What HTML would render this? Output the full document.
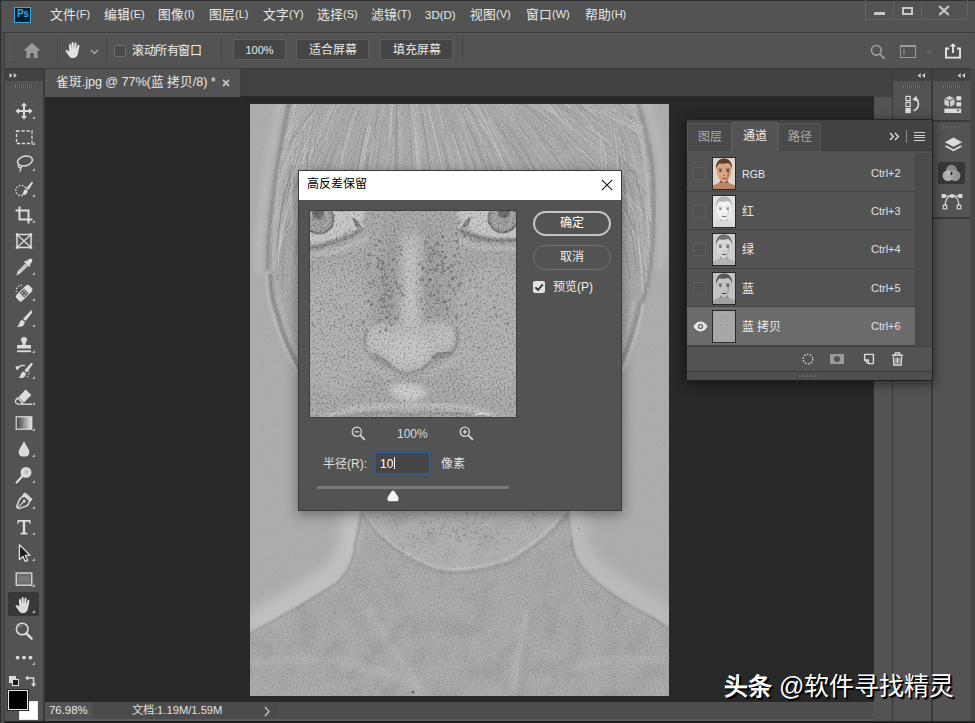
<!DOCTYPE html>
<html lang="zh-CN">
<head>
<meta charset="utf-8">
<title>Photoshop</title>
<style>
html,body{margin:0;padding:0}
body{width:975px;height:723px;overflow:hidden;background:#535353;font-family:"Liberation Sans",sans-serif;font-size:12px;color:#e4e4e4;position:relative;line-height:1}
div,span,svg{position:absolute;box-sizing:border-box}
span{white-space:nowrap}
.menu i{font-style:normal;font-size:11px;position:relative;top:-1px}
.menu span{top:9px;font-size:12px;color:#e8e8e8;letter-spacing:0}
.obtn{top:39px;height:21px;background:#454545;border:1px solid #5f5f5f;border-radius:2px;text-align:center;line-height:20px;color:#eaeaea;font-size:12px}
.vsep{width:1px;background:#474747;top:38px;height:24px}
.row{left:688px;width:227px;height:38px;background:#535353;border-bottom:1px solid #434343}
.row .nm{left:55px;top:14px;font-size:12px;color:#ececec}
.row .sc{left:184px;top:14px;font-size:11px;color:#e0e0e0}
.row .eyebox{left:6px;top:13px;width:13px;height:13px;border:1px solid #5d5d5d;background:#515151}
.row .th{left:25px;top:3px;width:24px;height:33px;border:1px solid #2a2a2a;overflow:hidden}
.ptab{top:123px;height:28px;font-size:12px;text-align:center;line-height:27px;color:#a9a9a9;background:#4a4a4a;border:1px solid #565656;border-bottom:none}
.tool{left:10px;width:28px;height:24px}
.tri{width:0;height:0;border-left:3px solid transparent;border-bottom:3px solid #b8b8b8;left:33px}
</style>
</head>
<body>
<!-- ===== window chrome ===== -->
<div id="menubar" class="menu" style="left:0;top:0;width:975px;height:33px;background:#535353;border-top:1px solid #303030;border-bottom:1px solid #3b3b3b">
<div style="left:14px;top:6px;width:17px;height:16px;background:#0a1e2c;border:1px solid #31a8e0"></div>
<span style="left:17px;top:8px;font-size:10px;font-weight:bold;color:#31a8e0;letter-spacing:-0.5px">Ps</span>
<span style="left:50px;font-size:12.8px;top:8px">文件<i>(F)</i></span>
<span style="left:104px;font-size:12.8px;top:8px">编辑<i>(E)</i></span>
<span style="left:158px;font-size:12.8px;top:8px">图像<i>(I)</i></span>
<span style="left:209px;font-size:12.8px;top:8px">图层<i>(L)</i></span>
<span style="left:263px;font-size:12.8px;top:8px">文字<i>(Y)</i></span>
<span style="left:317px;font-size:12.8px;top:8px">选择<i>(S)</i></span>
<span style="left:371px;font-size:12.8px;top:8px">滤镜<i>(T)</i></span>
<span style="left:425px;font-size:11.5px;top:9px">3D(D)</span>
<span style="left:470px;font-size:12.8px;top:8px">视图<i>(V)</i></span>
<span style="left:526px;font-size:12.8px;top:8px">窗口<i>(W)</i></span>
<span style="left:585px;font-size:12.8px;top:8px">帮助<i>(H)</i></span>
<!-- window controls -->
<div style="left:865px;top:-1px;width:103px;height:20px;border:1px solid #616161;border-top:none"></div>
<div style="left:893px;top:0;width:1px;height:18px;background:#616161"></div>
<div style="left:921px;top:0;width:1px;height:18px;background:#616161"></div>
<div style="left:874px;top:11px;width:11px;height:3px;background:#c8c8c8"></div>
<div style="left:902px;top:6px;width:11px;height:8px;border:2px solid #c8c8c8"></div>
<svg style="left:938px;top:4px" width="12" height="11" viewBox="0 0 12 11"><path d="M1.2 1 L10.8 10 M10.8 1 L1.2 10" stroke="#c8c8c8" stroke-width="2.2" fill="none"/></svg>
</div>
<div id="optbar" style="left:4px;top:33px;width:966px;height:36px;background:#535353;border-top:1px solid #5b5b5b;border-bottom:1px solid #3a3a3a"></div>
<!-- options bar content (page coords) -->
<div style="left:8px;top:40px;width:5px;height:21px;background:repeating-linear-gradient(to bottom,#5c5c5c 0,#5c5c5c 1px,#4c4c4c 1px,#4c4c4c 2px)"></div>
<svg style="left:23px;top:42px" width="18" height="17" viewBox="0 0 18 17"><path d="M9 1 L17.5 8.6 L14.6 8.6 L14.6 16 L10.8 16 L10.8 11 L7.2 11 L7.2 16 L3.4 16 L3.4 8.6 L0.5 8.6 Z" fill="#9b9b9b"/></svg>
<div class="vsep" style="left:57px"></div>
<svg id="handopt" style="left:64px;top:40px" width="20" height="20" viewBox="0 0 20 20"><path d="M5.2 11.5 L4.9 5.2 Q5 4 5.9 4 Q6.8 4 6.9 5.1 L7.3 9.3 L7.5 3.2 Q7.6 2 8.6 2 Q9.6 2 9.7 3.2 L9.9 9 L10.6 3.4 Q10.8 2.3 11.7 2.4 Q12.7 2.5 12.6 3.7 L12.3 9.4 L13.5 5.6 Q13.9 4.6 14.7 4.8 Q15.6 5.1 15.4 6.2 L14.3 12 Q13.9 15 12.6 16.6 Q11.2 18.3 8.9 18.3 Q6.6 18.3 5.1 16.3 L1.8 11.6 Q1.3 10.7 2.1 10.2 Q2.9 9.7 3.7 10.4 Z" fill="#e2e2e2"/></svg>
<svg style="left:90px;top:49px" width="9" height="6" viewBox="0 0 9 6"><path d="M1 1 L4.5 4.5 L8 1" stroke="#a8a8a8" stroke-width="1.4" fill="none"/></svg>
<div class="vsep" style="left:106px"></div>
<div style="left:114px;top:45px;width:12px;height:12px;border:1px solid #6f6f6f;border-radius:2px;background:#4a4a4a"></div>
<span style="left:132px;top:45px;font-size:12px;color:#ededed;letter-spacing:-0.4px">滚动所有窗口</span>
<div class="vsep" style="left:221px"></div>
<div class="obtn" style="left:233px;width:53px;font-size:11px">100%</div>
<div class="obtn" style="left:296px;width:73px">适合屏幕</div>
<div class="obtn" style="left:380px;width:73px">填充屏幕</div>
<div class="vsep" style="left:457px;background:#4b4b4b"></div>
<div class="vsep" style="left:462px"></div>
<!-- right side icons of options bar -->
<svg style="left:870px;top:44px" width="16" height="16" viewBox="0 0 16 16"><circle cx="6.3" cy="6.3" r="4.8" stroke="#a0a0a0" stroke-width="1.6" fill="none"/><path d="M9.8 9.8 L14.6 14.6" stroke="#a0a0a0" stroke-width="1.8"/></svg>
<div style="left:900px;top:45px;width:16px;height:13px;border:1px solid #9a9a9a;border-top:2px solid #9a9a9a"></div>
<div style="left:903px;top:49px;width:2px;height:6px;background:repeating-linear-gradient(to bottom,#9a9a9a 0,#9a9a9a 1px,transparent 1px,transparent 2px)"></div>
<svg style="left:926px;top:50px" width="7" height="5" viewBox="0 0 7 5"><path d="M1 1 L3.5 3.5 L6 1" stroke="#6a6a6a" stroke-width="1.2" fill="none"/></svg>
<svg style="left:944px;top:42px" width="18" height="17" viewBox="0 0 18 17"><path d="M5 6.5 L2 6.5 L2 15.6 L16 15.6 L16 6.5 L13 6.5" stroke="#e6e6e6" stroke-width="1.9" fill="none"/><path d="M9 11 L9 2.5" stroke="#e6e6e6" stroke-width="1.9"/><path d="M5.6 4.6 L9 1.2 L12.4 4.6 Z" fill="#e6e6e6"/></svg>
<div id="tabrow" style="left:45px;top:69px;width:829px;height:28px;background:#424242;border-bottom:1px solid #2c2c2c">
<div style="left:0;top:0;width:196px;height:28px;background:#535353;border-right:1px solid #3e3e3e"></div>
<span style="left:11px;top:7px;font-size:12.7px;color:#e6e6e6;letter-spacing:-0.1px">雀斑.jpg @ 77%(蓝 拷贝/8) *</span>
<svg style="left:177px;top:10px" width="8" height="8" viewBox="0 0 8 8"><path d="M1 1 L7 7 M7 1 L1 7" stroke="#bdbdbd" stroke-width="1.8" fill="none"/></svg>
</div>
<div id="canvas" style="left:45px;top:97px;width:829px;height:606px;background:#282828"></div>
<!--DOC-->
<svg id="docimg" style="left:250px;top:104px" width="419" height="592" viewBox="0 0 419 592">
<defs><filter id="gr" x="0" y="0" width="100%" height="100%"><feTurbulence type="fractalNoise" baseFrequency="0.75" numOctaves="2" seed="5"/><feColorMatrix type="matrix" values="2.4 0 0 0 -0.7  2.4 0 0 0 -0.7  2.4 0 0 0 -0.7  0 0 0 0 1"/></filter><filter id="mot" x="0" y="0" width="100%" height="100%"><feTurbulence type="fractalNoise" baseFrequency="0.045" numOctaves="3" seed="4"/><feColorMatrix type="matrix" values="2.2 0 0 0 -0.6  2.2 0 0 0 -0.6  2.2 0 0 0 -0.6  0 0 0 0 1"/></filter><filter id="hairn" x="0" y="0" width="100%" height="100%"><feTurbulence type="fractalNoise" baseFrequency="0.012 0.22" numOctaves="3" seed="11"/><feColorMatrix type="matrix" values="3 0 0 0 -1  3 0 0 0 -1  3 0 0 0 -1  0 0 0 0 1"/></filter><filter id="bl05" x="0" y="0" width="100%" height="100%"><feGaussianBlur stdDeviation="0.45"/></filter><filter id="bl1"><feGaussianBlur stdDeviation="1"/></filter><filter id="bl3"><feGaussianBlur stdDeviation="3"/></filter><filter id="bl6"><feGaussianBlur stdDeviation="6"/></filter><clipPath id="hairclip"><path d="M38 -5 Q26 50 20 99 Q15 140 16 165 Q17 188 20 200 L44 172 Q54 140 74 122 Q120 86 215 90 Q300 86 346 122 Q366 140 376 172 L396 192 Q402 175 403 160 Q408 110 404 60 Q398 20 388 -5 Z"/></clipPath><clipPath id="docclip"><rect width="419" height="592"/></clipPath></defs>
<g clip-path="url(#docclip)">
<rect width="419" height="592" fill="#acacac"/>
<path d="M38 -5 Q26 50 20 99 Q15 140 16 165 Q18 200 24 211 Q30 240 48 269 Q70 340 100 392 Q140 448 215 466 Q300 440 340 392 Q364 330 372 270 Q386 240 394 199 Q402 175 403 160 Q408 110 404 60 Q398 20 388 -5 Z" fill="#a8a8a8" filter="url(#bl1)"/>
<path d="M31 -5 Q19 50 13 99 Q8 140 9 170 M395 -5 Q405 20 411 60 Q415 110 410 165" fill="none" stroke="#bcbcbc" stroke-width="6" filter="url(#bl3)"/>
<path d="M52 180 Q70 100 210 90 Q350 100 368 180 Q380 262 340 392 Q300 440 215 466 Q140 448 100 392 Q40 262 52 180 Z" fill="#a9a9a9" filter="url(#bl6)"/>
<g clip-path="url(#hairclip)" fill="none" opacity=".75" filter="url(#bl05)"><path d="M211.3 4.5 Q232.7 38.2 250.3 82.6" stroke="#bcbcbc" stroke-width="0.5"/><path d="M188.7 -8.3 Q203.1 22.6 215 62.5" stroke="#929292" stroke-width="0.8"/><path d="M257.7 -27.7 Q291.5 -14.7 312.4 18.4" stroke="#c0c0c0" stroke-width="0.6"/><path d="M64.1 70.6 Q56.9 87.7 52.4 110.6" stroke="#c8c8c8" stroke-width="0.6"/><path d="M451.3 36.4 Q480.4 46.2 506.4 68.7" stroke="#c0c0c0" stroke-width="1"/><path d="M303.5 101.2 Q316.4 120.6 324.6 147.7" stroke="#d0d0d0" stroke-width="0.6"/><path d="M230.8 65.4 Q237.9 82.5 243.7 105.3" stroke="#c4c4c4" stroke-width="0.8"/><path d="M53 45.1 Q38 68.7 28.6 101.1" stroke="#d6d6d6" stroke-width="0.7"/><path d="M306.8 97 Q332 131 351.1 177" stroke="#828282" stroke-width="0.7"/><path d="M127.8 110.6 Q124.4 151 121.9 201" stroke="#c0c0c0" stroke-width="0.5"/><path d="M145.6 5.5 Q144.5 33 144 67.5" stroke="#929292" stroke-width="0.5"/><path d="M42.1 -33.4 Q1.6 -21.4 -24.8 15.1" stroke="#868686" stroke-width="0.7"/><path d="M23.4 68.4 Q1.4 99.2 -13.5 141.4" stroke="#c0c0c0" stroke-width="0.7"/><path d="M168.9 79.7 Q170.4 97.6 171.2 120.9" stroke="#d0d0d0" stroke-width="1"/><path d="M-151.5 17 Q-181.3 24.4 -206.3 47.5" stroke="#d0d0d0" stroke-width="0.7"/><path d="M356.8 -5.1 Q381.4 2.1 403.9 20.3" stroke="#c8c8c8" stroke-width="0.6"/><path d="M65.2 -4.4 Q45.9 14.2 32 42.3" stroke="#d6d6d6" stroke-width="0.5"/><path d="M306.8 22.3 Q330.7 38.7 350.7 65.2" stroke="#929292" stroke-width="1"/><path d="M264.9 39.9 Q284 63.4 293.9 97.5" stroke="#c4c4c4" stroke-width="0.6"/><path d="M270.5 -19.8 Q313 -2.6 351.9 30" stroke="#828282" stroke-width="0.6"/><path d="M206.6 -19.7 Q228.6 4.7 244.3 39.7" stroke="#828282" stroke-width="0.7"/><path d="M-109.5 21.7 Q-147.8 34.1 -175.4 67.7" stroke="#d0d0d0" stroke-width="0.5"/><path d="M188 111.8 Q195 159.3 199 218.3" stroke="#bcbcbc" stroke-width="0.8"/><path d="M203.9 42.5 Q214.7 73.5 222 113.1" stroke="#c4c4c4" stroke-width="0.5"/><path d="M-52.5 -8.8 Q-74.8 -2.4 -91.5 17.6" stroke="#c0c0c0" stroke-width="0.5"/><path d="M107.6 63.3 Q96.8 110.3 90.4 169" stroke="#c0c0c0" stroke-width="0.6"/><path d="M109.6 5.5 Q100.7 28.9 94.4 59.3" stroke="#868686" stroke-width="0.8"/><path d="M421 63.6 Q473.6 90 512.2 140.8" stroke="#d6d6d6" stroke-width="0.7"/><path d="M258.3 -24.3 Q288.3 -11.4 313 15.2" stroke="#cecece" stroke-width="1"/><path d="M480.9 34.1 Q520.6 44.6 556.6 72" stroke="#bcbcbc" stroke-width="0.5"/><path d="M39.1 19.7 Q9.3 48.8 -15.5 90.1" stroke="#8c8c8c" stroke-width="1"/><path d="M198.6 8.1 Q217 47.4 228.7 98.2" stroke="#bcbcbc" stroke-width="0.7"/><path d="M57.6 75 Q38.5 114.6 28.1 166.4" stroke="#c4c4c4" stroke-width="0.6"/><path d="M-69.5 67.6 Q-90.9 83.6 -105.6 110.4" stroke="#868686" stroke-width="0.5"/><path d="M-142.7 16.1 Q-180.4 25.1 -214.3 51.1" stroke="#828282" stroke-width="0.7"/><path d="M198.7 122.3 Q207.4 170.9 211.5 231.4" stroke="#868686" stroke-width="0.5"/><path d="M255.4 7.7 Q273.8 24.6 288.5 50.1" stroke="#828282" stroke-width="1"/><path d="M-25.4 30.5 Q-62.7 54 -84.5 97.1" stroke="#c0c0c0" stroke-width="0.5"/><path d="M-118.7 45.4 Q-164.4 64.6 -198.5 106" stroke="#cecece" stroke-width="0.8"/><path d="M22 20.5 Q-15.5 51.4 -34.2 101.8" stroke="#929292" stroke-width="0.8"/><path d="M240.9 125.7 Q254.1 164.6 264.2 213.8" stroke="#cecece" stroke-width="0.5"/><path d="M419.6 79.2 Q462.9 105.1 499.3 147.9" stroke="#828282" stroke-width="0.8"/><path d="M73 34.9 Q55.6 66.3 41.7 107.4" stroke="#c8c8c8" stroke-width="0.5"/><path d="M125.5 119.4 Q122.8 149.8 121.5 188.1" stroke="#c4c4c4" stroke-width="0.5"/><path d="M256.4 20 Q274.4 39.2 285.8 67.9" stroke="#8c8c8c" stroke-width="1"/><path d="M177.9 2.7 Q190.5 48.2 199.4 105" stroke="#d6d6d6" stroke-width="1"/><path d="M-23.3 40.2 Q-64.4 69.4 -86.6 119.9" stroke="#cecece" stroke-width="1"/><path d="M334.8 32.6 Q380.5 59.8 407.7 110.5" stroke="#828282" stroke-width="0.5"/><path d="M59.5 -2.3 Q42.9 13.4 32.4 38.1" stroke="#c0c0c0" stroke-width="1"/><path d="M403.6 26.1 Q442 39.8 471.2 73.1" stroke="#c0c0c0" stroke-width="1"/><path d="M284 -20.4 Q302.7 -12.9 319.6 3.1" stroke="#d6d6d6" stroke-width="1"/><path d="M465.3 31.6 Q485.4 38.1 502.3 55.3" stroke="#bcbcbc" stroke-width="1"/><path d="M140.9 82.5 Q139.6 113.6 138.8 152.6" stroke="#d6d6d6" stroke-width="1"/><path d="M-108.6 26.5 Q-161.2 44.1 -191.4 93.7" stroke="#8c8c8c" stroke-width="1"/><path d="M21.6 -10.7 Q-11.4 5.2 -36.5 37" stroke="#929292" stroke-width="0.8"/><path d="M279.6 80.7 Q297.3 107.6 310.9 143.7" stroke="#8c8c8c" stroke-width="0.5"/><path d="M32 -16.5 Q-11.6 3.4 -40.7 46" stroke="#cecece" stroke-width="0.7"/><path d="M-150.5 74.7 Q-174.5 87.4 -187.4 114.7" stroke="#929292" stroke-width="0.8"/><path d="M363.7 54 Q385.9 69.1 399.7 96.2" stroke="#bcbcbc" stroke-width="0.8"/><path d="M211.3 11.7 Q224.9 36 232.6 68.9" stroke="#c8c8c8" stroke-width="0.7"/><path d="M119.3 48.4 Q116.6 64.8 114.6 86.2" stroke="#828282" stroke-width="0.7"/><path d="M146.3 -9.2 Q144.3 39.8 143.2 100.2" stroke="#c0c0c0" stroke-width="0.5"/><path d="M211.6 -14.5 Q242.7 19.7 266.1 67.7" stroke="#cecece" stroke-width="0.8"/><path d="M-70.8 51.9 Q-119.2 80.4 -155.2 130.3" stroke="#bcbcbc" stroke-width="1"/><path d="M97 88 Q92.8 106.6 89.3 130.8" stroke="#cecece" stroke-width="0.8"/><path d="M5.8 -4.1 Q-10.9 4.8 -25.5 21.3" stroke="#8c8c8c" stroke-width="0.5"/><path d="M106 16.7 Q97.4 40.5 90.6 71.4" stroke="#c8c8c8" stroke-width="0.7"/><path d="M-48 -13.2 Q-104.6 -1.3 -146.8 43.2" stroke="#c8c8c8" stroke-width="1"/><path d="M-33.7 116.6 Q-66.4 157.8 -90.9 213.6" stroke="#cecece" stroke-width="0.6"/><path d="M-88.8 23 Q-127 37.2 -159.8 67.8" stroke="#d6d6d6" stroke-width="1"/><path d="M75.8 22.3 Q51.8 60.9 40.7 113.1" stroke="#c8c8c8" stroke-width="0.5"/><path d="M368.7 -2.9 Q427.4 11.1 473.2 56.3" stroke="#c4c4c4" stroke-width="0.8"/><path d="M421.2 54.7 Q453.7 70.4 477.4 102.2" stroke="#929292" stroke-width="1"/><path d="M224.8 13.2 Q238.9 34 249.8 62.4" stroke="#d0d0d0" stroke-width="0.6"/><path d="M197.4 35.5 Q202.6 52.8 206.8 75.4" stroke="#c0c0c0" stroke-width="0.7"/><path d="M170.2 -8.8 Q179 28.9 185.1 76.1" stroke="#bcbcbc" stroke-width="0.7"/><path d="M76.8 87.5 Q71.4 104.4 67.3 126.7" stroke="#8c8c8c" stroke-width="0.8"/><path d="M334.4 -17.7 Q366.2 -10.3 384.9 19.4" stroke="#868686" stroke-width="0.6"/><path d="M460.7 33.4 Q487.1 41.8 510.5 62.3" stroke="#868686" stroke-width="0.8"/><path d="M300.8 -7 Q343.1 10.3 378.5 45.8" stroke="#c8c8c8" stroke-width="0.5"/><path d="M219.9 -7.5 Q241.2 16.4 259.1 49.7" stroke="#c8c8c8" stroke-width="0.7"/><path d="M228.4 15.5 Q250.6 46.5 265 89" stroke="#cecece" stroke-width="1"/><path d="M203 32.3 Q221.1 79.1 235.2 138.3" stroke="#828282" stroke-width="0.6"/><path d="M446.3 33.2 Q500.3 49.4 539 95" stroke="#bcbcbc" stroke-width="0.6"/><path d="M-111.8 42.4 Q-150.4 58.9 -174 97.3" stroke="#c8c8c8" stroke-width="1"/><path d="M-53.3 68.7 Q-96.7 102.4 -124.1 156.7" stroke="#c0c0c0" stroke-width="0.5"/><path d="M397.4 15.4 Q454.2 32 500.5 75.7" stroke="#d6d6d6" stroke-width="1"/><path d="M242.1 -36.8 Q281 -24 314.2 6.2" stroke="#8c8c8c" stroke-width="0.5"/><path d="M163 -7.2 Q169.9 39.7 173.2 98" stroke="#c0c0c0" stroke-width="1"/><path d="M415.7 32.6 Q442.7 43.1 467.1 64.8" stroke="#8c8c8c" stroke-width="0.6"/><path d="M64 9.3 Q34.5 42.8 20.4 91.8" stroke="#d6d6d6" stroke-width="0.8"/><path d="M454.2 53.2 Q482.3 64.8 507.7 87.6" stroke="#d0d0d0" stroke-width="0.6"/><path d="M270.4 -21.1 Q297.1 -9.9 314.4 16.9" stroke="#8c8c8c" stroke-width="1"/><path d="M132.3 -15.2 Q128.5 2.5 125.7 25.6" stroke="#d0d0d0" stroke-width="0.5"/><path d="M14.6 80.6 Q-0.9 103.2 -10.9 134.4" stroke="#d6d6d6" stroke-width="0.8"/><path d="M161.4 -0.3 Q166.6 45.4 170.5 102" stroke="#c0c0c0" stroke-width="0.8"/><path d="M356.9 -6.8 Q409 5.7 439.7 52.4" stroke="#d6d6d6" stroke-width="0.7"/><path d="M251.4 121.2 Q269.2 166.2 283.6 223.1" stroke="#c0c0c0" stroke-width="0.6"/><path d="M48.9 15.7 Q27.8 38.1 14.5 71.3" stroke="#d0d0d0" stroke-width="1"/><path d="M219.3 -3.3 Q238.6 20.3 251.4 54" stroke="#d6d6d6" stroke-width="0.8"/><path d="M240.4 -41.3 Q278.5 -31 308.9 -0.7" stroke="#8c8c8c" stroke-width="0.6"/><path d="M193.5 39.6 Q198.8 59.2 202.5 84.6" stroke="#868686" stroke-width="0.7"/><path d="M50.6 -12.7 Q3.9 16.4 -25 68.8" stroke="#8c8c8c" stroke-width="0.7"/><path d="M217 42.1 Q238 88.7 250.9 148.7" stroke="#868686" stroke-width="0.8"/><path d="M-54 96.8 Q-73.5 116.7 -89.9 145.2" stroke="#d0d0d0" stroke-width="0.7"/><path d="M102.5 5.3 Q80.8 50.8 66.2 109.3" stroke="#868686" stroke-width="0.6"/><path d="M-53 83.8 Q-78 106.6 -99.3 139.6" stroke="#d0d0d0" stroke-width="0.8"/><path d="M-157.7 60.1 Q-195.7 76.1 -220.5 113" stroke="#c8c8c8" stroke-width="0.8"/><path d="M188.9 94.6 Q195 131.9 199.5 178.4" stroke="#c8c8c8" stroke-width="1"/><path d="M334.7 22.7 Q362.8 38.2 385.2 66.5" stroke="#d0d0d0" stroke-width="0.7"/><path d="M189.4 19.1 Q199.3 50.3 205 90.2" stroke="#c0c0c0" stroke-width="0.6"/><path d="M107.1 -5.9 Q91.9 24.6 83.9 64.9" stroke="#bcbcbc" stroke-width="0.6"/><path d="M173.1 32 Q179.6 73.1 184 124.3" stroke="#bcbcbc" stroke-width="0.6"/><path d="M239.2 2.9 Q266.4 29.9 286.6 69.2" stroke="#868686" stroke-width="0.7"/><path d="M40.9 1 Q26.6 12.8 18.9 33.2" stroke="#929292" stroke-width="0.8"/><path d="M58 8.6 Q39.4 28.7 28.7 58.9" stroke="#d6d6d6" stroke-width="0.7"/><path d="M112.3 37 Q102.6 75.3 96.5 123.4" stroke="#c4c4c4" stroke-width="0.5"/><path d="M242.5 15.5 Q263.3 39.7 277.6 74.4" stroke="#8c8c8c" stroke-width="0.5"/><path d="M324.2 17.4 Q367.9 40.3 394 86.5" stroke="#828282" stroke-width="0.8"/><path d="M341.9 -16.6 Q399.1 -5.3 437.2 42.5" stroke="#d6d6d6" stroke-width="0.8"/><path d="M227 -5.9 Q242.8 11 253.2 36.3" stroke="#d0d0d0" stroke-width="0.5"/><path d="M-114.1 28.6 Q-157.4 43.4 -185.6 83.3" stroke="#d6d6d6" stroke-width="0.5"/><path d="M135.5 -11.5 Q128.2 30.3 122.8 82.3" stroke="#c8c8c8" stroke-width="0.7"/><path d="M-95.6 13 Q-134.9 24.7 -166 56.5" stroke="#c0c0c0" stroke-width="0.5"/><path d="M362.9 13.8 Q403 28.9 434.8 63.2" stroke="#c4c4c4" stroke-width="1"/><path d="M379.3 -5.9 Q439.5 6.1 492.4 46.1" stroke="#868686" stroke-width="0.6"/><path d="M160.4 16.4 Q162.4 40.6 163.2 71.4" stroke="#d0d0d0" stroke-width="0.7"/><path d="M284.9 -20.4 Q338 -3 375.2 43.2" stroke="#c0c0c0" stroke-width="0.7"/><path d="M288.3 35.2 Q311.4 56.6 327.2 89.5" stroke="#868686" stroke-width="0.8"/><path d="M222.3 42.4 Q229.1 57.7 234 78.2" stroke="#bcbcbc" stroke-width="0.5"/><path d="M400.7 103.2 Q423.5 122.2 436.3 153.6" stroke="#c4c4c4" stroke-width="0.8"/><path d="M351.8 79.3 Q373.1 98.7 383.8 129.9" stroke="#d6d6d6" stroke-width="1"/><path d="M264.2 3.3 Q291.6 23.7 308.7 58.1" stroke="#828282" stroke-width="0.6"/><path d="M52.1 -30.1 Q34.6 -22 22.1 -3.6" stroke="#929292" stroke-width="0.5"/><path d="M73.5 7.6 Q53 34.1 41.2 71.5" stroke="#868686" stroke-width="0.5"/><path d="M-180.6 23.1 Q-212.4 30.5 -241.2 52.5" stroke="#bcbcbc" stroke-width="0.8"/><path d="M406.4 14.3 Q439.6 24.1 466.8 50.6" stroke="#868686" stroke-width="0.8"/><path d="M223.5 -26.2 Q247.3 -9.7 265.3 18" stroke="#c0c0c0" stroke-width="1"/><path d="M9.2 -22.8 Q-22.9 -13 -43.5 17" stroke="#929292" stroke-width="0.5"/><path d="M355 3.3 Q387.5 14.2 406.6 45.7" stroke="#c4c4c4" stroke-width="0.7"/><path d="M269 117.6 Q276 133.6 280.8 155.2" stroke="#d0d0d0" stroke-width="0.8"/><path d="M247 -36.7 Q266.9 -29.7 278.7 -9" stroke="#8c8c8c" stroke-width="0.6"/><path d="M-55.6 104.5 Q-76.2 126.4 -91.8 157.9" stroke="#828282" stroke-width="0.5"/><path d="M320 80.7 Q339.3 102.3 353.9 133.2" stroke="#c8c8c8" stroke-width="1"/><path d="M-85.6 28.3 Q-139.3 49.6 -188.3 90.1" stroke="#c4c4c4" stroke-width="0.5"/><path d="M173.3 122.6 Q177.3 170.4 180.1 229.5" stroke="#8c8c8c" stroke-width="0.8"/><path d="M53.3 -8.5 Q23.2 13.6 -3.2 47.1" stroke="#8c8c8c" stroke-width="0.6"/><path d="M98.4 32.5 Q89.1 58.2 82.7 91.3" stroke="#828282" stroke-width="0.5"/><path d="M143.7 38.6 Q142.8 59.9 142.3 87.1" stroke="#d0d0d0" stroke-width="0.5"/><path d="M161.8 61.4 Q163 82.8 163.9 110" stroke="#c0c0c0" stroke-width="0.5"/><path d="M218.8 -8.3 Q232.2 7.6 241.1 30.8" stroke="#d6d6d6" stroke-width="0.6"/><path d="M284.3 35 Q314.3 63.1 332.5 106" stroke="#bcbcbc" stroke-width="0.5"/><path d="M32.4 16.6 Q11.4 35.5 -4.7 64.1" stroke="#8c8c8c" stroke-width="0.7"/><path d="M265.6 7.9 Q286.7 25.1 303.9 51.5" stroke="#828282" stroke-width="0.6"/><path d="M239.9 40.9 Q267.9 84.9 286 143.5" stroke="#c4c4c4" stroke-width="0.5"/><path d="M6.4 130.7 Q-2.8 148.6 -8.8 172.9" stroke="#c4c4c4" stroke-width="0.8"/><path d="M56.3 -30.6 Q28.3 -18.3 3.7 5.6" stroke="#c4c4c4" stroke-width="1"/><path d="M-86.9 6 Q-143.2 20.6 -189.8 62.4" stroke="#cecece" stroke-width="0.8"/><path d="M67.7 99.9 Q54.7 136.7 43.8 183.3" stroke="#d0d0d0" stroke-width="1"/><path d="M49.9 31.6 Q39.2 46.4 31.5 67.5" stroke="#c8c8c8" stroke-width="0.6"/><path d="M49.2 -42 Q0.2 -31.9 -30.5 10.6" stroke="#c8c8c8" stroke-width="0.7"/><path d="M196.8 39.1 Q207.9 74.8 216.9 119.9" stroke="#c8c8c8" stroke-width="0.8"/><path d="M135.7 -8.1 Q132.7 11.2 130.7 36" stroke="#bcbcbc" stroke-width="0.6"/><path d="M106.7 -3.4 Q97.3 16.7 92 43.7" stroke="#929292" stroke-width="0.7"/><path d="M60.4 44.4 Q51.4 60.5 46.4 82.9" stroke="#868686" stroke-width="0.8"/><path d="M222.3 113 Q236.2 161.2 245.9 221.5" stroke="#c4c4c4" stroke-width="0.8"/><path d="M64.7 9.2 Q53.9 22.7 48.5 43.1" stroke="#929292" stroke-width="0.5"/><path d="M-3.2 25.3 Q-46.6 55.3 -77.4 104.8" stroke="#cecece" stroke-width="0.6"/><path d="M380.9 -0.4 Q425.6 10.3 453.2 50.2" stroke="#c0c0c0" stroke-width="1"/><path d="M87.7 38.9 Q74.6 70.1 64.3 110.2" stroke="#8c8c8c" stroke-width="0.6"/><path d="M130.6 117.6 Q129.3 137.2 128.4 162.3" stroke="#c4c4c4" stroke-width="0.7"/><path d="M440.4 75.4 Q492 102 529.4 152.5" stroke="#c8c8c8" stroke-width="1"/><path d="M-29 1.6 Q-81.8 21.3 -118.8 68.6" stroke="#cecece" stroke-width="0.6"/><path d="M67.5 75.6 Q58.8 97.1 53.1 125.3" stroke="#828282" stroke-width="0.6"/><path d="M472.7 41.3 Q496.4 49.4 515.9 69.8" stroke="#cecece" stroke-width="0.6"/><path d="M-145.1 25.8 Q-170.6 33.6 -186.4 58.3" stroke="#d0d0d0" stroke-width="0.5"/><path d="M71.2 30.5 Q55.7 56.8 45.3 92.1" stroke="#d0d0d0" stroke-width="0.7"/><path d="M81.2 28.9 Q69.8 51.4 61.8 81.4" stroke="#868686" stroke-width="0.8"/><path d="M148.6 7 Q148.5 23.2 148.4 44.1" stroke="#d6d6d6" stroke-width="0.6"/><path d="M186.9 74.9 Q194.7 117.9 198.7 171.5" stroke="#d6d6d6" stroke-width="0.8"/><path d="M261.3 -18.6 Q293.7 -3 322.1 25.5" stroke="#d6d6d6" stroke-width="1"/><path d="M147.1 -12.7 Q145.9 24.6 144.8 71" stroke="#868686" stroke-width="1"/><path d="M415 38.9 Q467 59.1 502.6 106.8" stroke="#cecece" stroke-width="0.5"/><path d="M-143.7 87.2 Q-185 110.9 -209.3 156.5" stroke="#c4c4c4" stroke-width="0.6"/><path d="M-65.2 -4 Q-123 9.8 -158.4 60.5" stroke="#cecece" stroke-width="0.6"/><path d="M321.7 -3.8 Q369 13 410.5 49.2" stroke="#828282" stroke-width="0.7"/><path d="M-40.3 13.4 Q-66.5 25.6 -80.7 53.9" stroke="#d6d6d6" stroke-width="0.6"/><path d="M86.8 75.8 Q79.7 99.1 74.8 129.1" stroke="#c4c4c4" stroke-width="0.6"/><path d="M217.7 79 Q225.6 103.5 231.2 135.1" stroke="#929292" stroke-width="0.6"/><path d="M33.8 11.2 Q-3 41 -34.5 84.8" stroke="#868686" stroke-width="0.8"/><path d="M113.2 69.2 Q104.7 114.3 98 170.3" stroke="#bcbcbc" stroke-width="0.8"/><path d="M34.8 32 Q14 55.3 -1 88.6" stroke="#cecece" stroke-width="0.7"/><path d="M200.9 -5.6 Q213.4 15.9 221 45.1" stroke="#c8c8c8" stroke-width="0.7"/><path d="M27.8 6.2 Q-7.5 31 -25.1 74.9" stroke="#828282" stroke-width="0.7"/><path d="M-21.8 85.7 Q-38.3 105 -50.7 132.6" stroke="#d0d0d0" stroke-width="0.8"/><path d="M192 37.8 Q196.5 55 199.4 77.6" stroke="#828282" stroke-width="0.5"/><path d="M240.3 -41.7 Q272.7 -32.8 302.6 -10.2" stroke="#868686" stroke-width="1"/><path d="M318.4 56.1 Q348.3 82.8 372 122.1" stroke="#828282" stroke-width="0.8"/><path d="M227.5 -25.8 Q270.1 0.7 296.5 48.4" stroke="#d6d6d6" stroke-width="0.5"/><path d="M271.6 -23.5 Q315.4 -8 352.1 27" stroke="#8c8c8c" stroke-width="0.5"/><path d="M439.2 36.8 Q492.6 54.3 531.1 100.1" stroke="#828282" stroke-width="0.8"/><path d="M87.2 61.1 Q76.3 92.5 67.9 132.4" stroke="#c8c8c8" stroke-width="0.5"/><path d="M242.7 -34.9 Q267.1 -25.5 288.6 -5.1" stroke="#c0c0c0" stroke-width="0.5"/><path d="M69.7 82.1 Q61.6 103.7 56.1 132" stroke="#bcbcbc" stroke-width="1"/><path d="M50.1 79.9 Q36.4 107.7 28.1 144.5" stroke="#bcbcbc" stroke-width="0.7"/><path d="M389.2 21.5 Q446.3 41.1 484.2 92.3" stroke="#d6d6d6" stroke-width="1"/><path d="M457.4 18.5 Q506.8 29.2 546.6 66.2" stroke="#d0d0d0" stroke-width="0.8"/><path d="M424.9 98 Q447.8 114.5 462.5 142.9" stroke="#c0c0c0" stroke-width="0.7"/><path d="M-144.7 67 Q-196.5 91 -238.8 136.8" stroke="#c8c8c8" stroke-width="0.7"/><path d="M51.7 84.9 Q34.3 121.4 25.9 169.2" stroke="#8c8c8c" stroke-width="0.7"/><path d="M19 127.5 Q8.6 149.2 3.4 178.4" stroke="#c8c8c8" stroke-width="0.6"/><path d="M244.2 12.8 Q275 45.8 290.1 94.7" stroke="#868686" stroke-width="0.6"/><path d="M-4.4 5.2 Q-29 18.4 -42.7 46.2" stroke="#d0d0d0" stroke-width="1"/><path d="M176.1 105.9 Q180.1 145.2 182.1 194" stroke="#929292" stroke-width="0.6"/><path d="M116.9 29.1 Q111.6 51.8 108.5 81" stroke="#c0c0c0" stroke-width="1"/><path d="M32.1 -19.6 Q14.7 -11 -0.7 5.4" stroke="#cecece" stroke-width="0.7"/><path d="M-117.5 13.9 Q-136.3 19.9 -153.5 35" stroke="#d0d0d0" stroke-width="0.5"/><path d="M3.3 89 Q-7.5 104.9 -14.2 127.6" stroke="#868686" stroke-width="0.6"/><path d="M-85.1 77.9 Q-128.5 108.3 -165.6 154.9" stroke="#929292" stroke-width="0.5"/><path d="M243.3 7 Q255.8 20.7 262 42.1" stroke="#d0d0d0" stroke-width="0.5"/><path d="M-50.8 52.5 Q-74.5 69.4 -94.7 96.3" stroke="#c0c0c0" stroke-width="0.6"/><path d="M246.4 30 Q262.1 51.3 273.4 80.9" stroke="#8c8c8c" stroke-width="0.5"/><path d="M44.7 33.7 Q26.9 56.3 18.3 89.1" stroke="#bcbcbc" stroke-width="0.8"/><path d="M-59.2 44.6 Q-75.1 55.3 -87 74.4" stroke="#929292" stroke-width="1"/><path d="M25.2 24.6 Q-7.9 54.2 -29.8 99.5" stroke="#c4c4c4" stroke-width="0.5"/><path d="M116 26.1 Q108.5 56.1 103.8 94.2" stroke="#8c8c8c" stroke-width="0.5"/><path d="M366.9 -8.3 Q405.5 0.4 431.6 33.9" stroke="#cecece" stroke-width="0.8"/><path d="M63.9 127.2 Q53.8 159.5 47.6 200.6" stroke="#cecece" stroke-width="0.7"/><path d="M-107.5 93.5 Q-128.9 109.7 -146.4 135.4" stroke="#d0d0d0" stroke-width="0.5"/><path d="M159.4 125.7 Q160.5 160.4 161.4 203.8" stroke="#868686" stroke-width="0.7"/><path d="M451.3 62.2 Q502.2 84 534.6 133.2" stroke="#929292" stroke-width="0.5"/><path d="M209.1 28.6 Q221.6 57.3 229.6 94.6" stroke="#cecece" stroke-width="0.8"/><path d="M-100.7 6.6 Q-158 20.2 -210.6 57.1" stroke="#828282" stroke-width="1"/><path d="M78.3 35 Q65.7 60 55.9 92.8" stroke="#d6d6d6" stroke-width="1"/><path d="M65.7 3.3 Q42.9 28 30 64.7" stroke="#828282" stroke-width="0.6"/><path d="M332.8 21.3 Q381.1 46.2 420.5 91" stroke="#c4c4c4" stroke-width="0.7"/><path d="M293.2 84 Q321.4 122.2 343.8 173.4" stroke="#cecece" stroke-width="0.6"/><path d="M6.2 66.6 Q-12.8 89.7 -27.4 122" stroke="#c4c4c4" stroke-width="0.7"/><path d="M-124.1 17 Q-145.9 23.7 -158.7 45.7" stroke="#c0c0c0" stroke-width="0.6"/><path d="M259.2 131.3 Q275.6 171.9 284.6 224.1" stroke="#929292" stroke-width="0.7"/><path d="M342.2 57.9 Q359 71.8 372.5 93.7" stroke="#929292" stroke-width="0.8"/><path d="M339.2 -7.2 Q389.5 6.9 424.5 49.7" stroke="#bcbcbc" stroke-width="0.7"/><path d="M163 3.2 Q167.5 39.3 170.4 84.3" stroke="#c4c4c4" stroke-width="0.8"/><path d="M21 66.8 Q-3.2 99.3 -15.8 144.8" stroke="#d0d0d0" stroke-width="1"/><path d="M-72.8 51.6 Q-110.6 73.9 -138.1 113.8" stroke="#868686" stroke-width="0.7"/><path d="M109.4 -2.2 Q96.9 26.1 90.2 63.3" stroke="#d0d0d0" stroke-width="0.6"/><path d="M278.7 38 Q302.7 62.7 317.6 99.5" stroke="#929292" stroke-width="1"/><path d="M-5.3 119.7 Q-17.3 139.6 -24.4 167" stroke="#c8c8c8" stroke-width="0.8"/><path d="M-111 84.9 Q-129 97.7 -143.2 119.2" stroke="#c4c4c4" stroke-width="0.6"/><path d="M-40.8 117.5 Q-55.8 136.7 -66.5 163.9" stroke="#828282" stroke-width="0.8"/><path d="M118.6 88.8 Q114 121.7 111.4 163" stroke="#868686" stroke-width="1"/><path d="M269.7 93.3 Q285.5 121.9 292.8 160.6" stroke="#cecece" stroke-width="0.8"/><path d="M137.3 117.7 Q135.4 158.1 134.3 208.2" stroke="#d0d0d0" stroke-width="0.5"/><path d="M270.8 32.4 Q283.9 47 294.7 68" stroke="#929292" stroke-width="0.7"/><path d="M123.6 -0.5 Q116.8 25.1 112.2 57.8" stroke="#bcbcbc" stroke-width="0.6"/><path d="M-187.4 26.8 Q-224.8 35.4 -258.9 60.5" stroke="#c0c0c0" stroke-width="0.6"/><path d="M170.2 65 Q172.6 88.5 173.7 118.4" stroke="#868686" stroke-width="0.8"/><path d="M164.8 25.6 Q168.4 59.8 171.3 102.6" stroke="#d6d6d6" stroke-width="0.7"/><path d="M42.8 7.7 Q8.7 36.6 -12.1 82.3" stroke="#929292" stroke-width="0.6"/><path d="M165.3 99.6 Q168 142.4 169.8 195.2" stroke="#d0d0d0" stroke-width="0.7"/><path d="M253.8 53.6 Q275.1 86.4 292.4 129.7" stroke="#868686" stroke-width="0.6"/><path d="M-142.6 45.7 Q-161.6 53.9 -173.3 74.3" stroke="#868686" stroke-width="0.6"/><path d="M134.7 33 Q131 68.4 128.9 112.6" stroke="#c4c4c4" stroke-width="0.5"/><path d="M84.5 19.9 Q75.2 37.8 67.9 61.8" stroke="#c4c4c4" stroke-width="0.6"/><path d="M24.1 24.1 Q7.1 40.1 -1.7 65.8" stroke="#bcbcbc" stroke-width="0.6"/><path d="M69.4 86.8 Q51.6 133.5 37.3 192.3" stroke="#bcbcbc" stroke-width="0.7"/><path d="M352.2 65.3 Q382.5 88.9 400.5 127.9" stroke="#d6d6d6" stroke-width="0.5"/><path d="M125.7 22.1 Q121.5 45.7 118.2 75.8" stroke="#d6d6d6" stroke-width="1"/><path d="M351.6 5.2 Q374.4 14 391.8 35.4" stroke="#d6d6d6" stroke-width="0.6"/><path d="M115.6 110.2 Q113.6 126.4 112.6 147.4" stroke="#d6d6d6" stroke-width="1"/><path d="M151.1 24.1 Q151.4 55.7 151.5 95.2" stroke="#d0d0d0" stroke-width="0.5"/><path d="M293.6 19.6 Q329.1 44.6 360 82.8" stroke="#c8c8c8" stroke-width="0.7"/><path d="M62.3 -12.8 Q33 9.4 15.8 46.7" stroke="#cecece" stroke-width="0.5"/><path d="M292.5 31.9 Q309.2 46.9 323.1 69.4" stroke="#d0d0d0" stroke-width="0.7"/><path d="M274.8 98.6 Q292.6 130.2 301.2 172.6" stroke="#8c8c8c" stroke-width="0.8"/><path d="M216.4 20.1 Q225 36.4 231.3 58.6" stroke="#868686" stroke-width="0.8"/><path d="M208.5 59 Q216.3 83.3 221.3 114.7" stroke="#c4c4c4" stroke-width="0.8"/><path d="M21.4 20 Q-1.5 39.2 -18.9 68.9" stroke="#828282" stroke-width="0.5"/><path d="M77.6 -17.7 Q42.9 11.6 24.5 58.8" stroke="#bcbcbc" stroke-width="1"/><path d="M312 -12 Q329.4 -5.2 344.6 10.2" stroke="#d6d6d6" stroke-width="1"/><path d="M77.9 -13.7 Q51.4 11.4 33.9 49.3" stroke="#929292" stroke-width="1"/><path d="M371.8 50.7 Q411.3 74 433.3 118.5" stroke="#c0c0c0" stroke-width="0.6"/><path d="M397 14.3 Q440.2 27.2 478.4 58.4" stroke="#d0d0d0" stroke-width="0.6"/><path d="M-22.3 17.8 Q-41.4 29.1 -51.7 52.1" stroke="#c8c8c8" stroke-width="0.7"/><path d="M40.1 -14.7 Q13.2 0.3 -3.8 29.8" stroke="#8c8c8c" stroke-width="0.6"/><path d="M187.4 30.9 Q195.2 60.6 199.8 98.5" stroke="#c8c8c8" stroke-width="0.8"/><path d="M131.1 -11.2 Q126.8 8.5 124.6 34" stroke="#828282" stroke-width="0.8"/><path d="M164 -15.3 Q169.1 13.4 172.2 49.7" stroke="#d0d0d0" stroke-width="0.6"/><path d="M163.5 42.5 Q165 61.9 165.9 86.8" stroke="#c4c4c4" stroke-width="0.6"/><path d="M80.4 47.3 Q74.1 62.7 70.4 83.6" stroke="#c0c0c0" stroke-width="0.6"/><path d="M42.7 -15.4 Q26.7 -5.6 16.6 13.7" stroke="#c4c4c4" stroke-width="0.8"/><path d="M65.4 6.5 Q53.3 21.1 46.6 43" stroke="#cecece" stroke-width="0.5"/><path d="M278.1 61.9 Q299.4 89.8 312 129.1" stroke="#8c8c8c" stroke-width="0.5"/><path d="M96.5 -17.7 Q86 -3.6 79.6 16.9" stroke="#828282" stroke-width="0.5"/><path d="M202.2 30.2 Q215.4 64.8 221.6 109.4" stroke="#d6d6d6" stroke-width="1"/><path d="M326.9 -3.6 Q367.1 10.5 398.5 44.6" stroke="#d0d0d0" stroke-width="0.6"/><path d="M399.5 64.6 Q427.5 81.5 445.8 113" stroke="#d0d0d0" stroke-width="0.8"/><path d="M168.7 96.1 Q171.1 127.2 172.8 166.2" stroke="#828282" stroke-width="0.7"/><path d="M208.4 -10.1 Q240.8 31.3 259.7 89" stroke="#828282" stroke-width="0.7"/><path d="M-90.1 52.1 Q-106.1 61.9 -119.6 79.2" stroke="#8c8c8c" stroke-width="1"/><path d="M213.2 116.1 Q219.9 144.3 223.7 180" stroke="#828282" stroke-width="0.6"/><path d="M25.5 11.6 Q11.9 23.1 1.3 41.4" stroke="#929292" stroke-width="0.6"/><path d="M78 105.8 Q64.7 150.4 53.9 206" stroke="#cecece" stroke-width="1"/><path d="M437 86.2 Q480.3 111.5 510.3 157.5" stroke="#d6d6d6" stroke-width="0.7"/><path d="M127.9 62 Q124.2 94.1 121.7 134.4" stroke="#c4c4c4" stroke-width="0.7"/><path d="M72.1 85.2 Q61 115.6 52.7 154.4" stroke="#8c8c8c" stroke-width="1"/><path d="M-40.5 88.9 Q-64.7 113.7 -84.7 148.8" stroke="#868686" stroke-width="0.5"/><path d="M313.4 57 Q351.4 91.9 371.4 146.1" stroke="#bcbcbc" stroke-width="0.7"/><path d="M165.8 68.4 Q167.5 90.7 168.8 119.1" stroke="#cecece" stroke-width="0.7"/><path d="M238.2 67.6 Q251.2 95.2 259.6 131.5" stroke="#cecece" stroke-width="0.6"/><path d="M486.5 47.6 Q519.1 58.3 548.6 82.4" stroke="#d0d0d0" stroke-width="0.8"/><path d="M55.4 -2.6 Q24.3 23.5 1.1 63.5" stroke="#bcbcbc" stroke-width="1"/><path d="M248.3 -39.5 Q307.5 -25.1 344.9 26.1" stroke="#d6d6d6" stroke-width="1"/><path d="M120.5 22.1 Q111.1 63.5 104.7 115.3" stroke="#d6d6d6" stroke-width="1"/><path d="M-114.7 95.6 Q-137 112.2 -156.4 137.9" stroke="#c4c4c4" stroke-width="0.6"/><path d="M182.6 -12.8 Q189.1 3.6 193.5 25.4" stroke="#d6d6d6" stroke-width="0.8"/><path d="M-162.2 43.5 Q-181.9 51.1 -196.2 70.4" stroke="#929292" stroke-width="0.5"/><path d="M87.8 -5.8 Q70.7 17.1 57.7 48.6" stroke="#c0c0c0" stroke-width="1"/><path d="M210.6 50.7 Q217.8 71.2 221.1 98.3" stroke="#c4c4c4" stroke-width="0.6"/><path d="M302.5 -18.2 Q334.4 -8.2 353.7 22.3" stroke="#c8c8c8" stroke-width="0.5"/><path d="M289.8 51.5 Q320.7 84.2 338.2 132.3" stroke="#d6d6d6" stroke-width="0.5"/><path d="M306.4 0.4 Q322.7 9 336.5 25.6" stroke="#8c8c8c" stroke-width="1"/><path d="M77.9 97.2 Q72.2 116.2 68.3 141" stroke="#8c8c8c" stroke-width="0.8"/><path d="M337.7 23 Q359.5 35.2 377.3 57.5" stroke="#cecece" stroke-width="0.5"/><path d="M179.1 116.9 Q183.7 159.5 187.3 212.3" stroke="#c4c4c4" stroke-width="0.5"/><path d="M-147.4 44.8 Q-200 63.4 -246.4 103" stroke="#d6d6d6" stroke-width="0.5"/><path d="M-28.3 1.4 Q-45.8 9.3 -61.6 25.1" stroke="#868686" stroke-width="0.7"/><path d="M-18.6 33.7 Q-53.7 58 -82.9 96.4" stroke="#c4c4c4" stroke-width="0.5"/><path d="M312.1 31 Q355.6 61.2 386.9 110.9" stroke="#cecece" stroke-width="0.7"/><path d="M184.9 20.1 Q189.1 36.6 191.8 58.3" stroke="#8c8c8c" stroke-width="0.7"/><path d="M30.9 9.2 Q14 23.1 2 45.8" stroke="#d6d6d6" stroke-width="0.5"/><path d="M334.9 33.3 Q371.9 55.9 393.8 97.9" stroke="#c4c4c4" stroke-width="1"/><path d="M160.3 23.9 Q162.1 48.4 163.5 79.6" stroke="#868686" stroke-width="0.8"/><path d="M-196.3 31.1 Q-253.2 43.5 -306.2 78.6" stroke="#8c8c8c" stroke-width="0.8"/><path d="M54.7 -26.6 Q10.8 -6.5 -24.7 32.7" stroke="#d0d0d0" stroke-width="0.5"/><path d="M185.6 58.6 Q191.9 91.3 196.1 132.5" stroke="#bcbcbc" stroke-width="0.7"/><path d="M306.8 30 Q350.5 61.2 385.4 110" stroke="#828282" stroke-width="0.6"/><path d="M267.1 -8.6 Q310.2 15.4 337.4 61.5" stroke="#c4c4c4" stroke-width="1"/><path d="M255.7 -26.7 Q296.4 -10.5 326.8 26.1" stroke="#8c8c8c" stroke-width="0.6"/><path d="M332.5 56.6 Q367.7 84.9 387.5 131" stroke="#828282" stroke-width="0.7"/><path d="M229.9 -15.4 Q266.3 13.1 292.5 57.9" stroke="#c8c8c8" stroke-width="1"/><path d="M14.3 17.8 Q-26.8 47.8 -49.2 98.9" stroke="#d6d6d6" stroke-width="0.5"/><path d="M472.4 27.4 Q510.1 36.9 534 70.8" stroke="#8c8c8c" stroke-width="0.6"/><path d="M385.5 80.3 Q411.3 99.6 432.4 129.8" stroke="#868686" stroke-width="1"/><path d="M125.9 -16.2 Q115.5 16.2 108.6 57.5" stroke="#bcbcbc" stroke-width="0.5"/><path d="M391.5 48 Q437.7 71.2 464.2 119.7" stroke="#868686" stroke-width="0.8"/><path d="M82 117.8 Q75.6 143.1 70.6 175.3" stroke="#d6d6d6" stroke-width="0.8"/><path d="M141.6 58.9 Q140.1 92.9 138.8 135.3" stroke="#c0c0c0" stroke-width="0.6"/><path d="M106.3 8.4 Q96.2 33.6 89.8 66.4" stroke="#c8c8c8" stroke-width="0.5"/><path d="M396.9 38.9 Q420.6 50.3 442.2 71.1" stroke="#828282" stroke-width="1"/><path d="M165.3 17.5 Q169 48.2 171.5 86.8" stroke="#c0c0c0" stroke-width="0.6"/><path d="M268.6 -28.4 Q306.1 -16.5 334.8 15.3" stroke="#8c8c8c" stroke-width="0.5"/><path d="M321.3 14.1 Q342 25.7 356.2 48.6" stroke="#c4c4c4" stroke-width="0.6"/><path d="M54.8 50.9 Q39 77.4 31.5 113.5" stroke="#c8c8c8" stroke-width="0.8"/><path d="M23.9 68.9 Q1.5 100.5 -17.2 142.4" stroke="#c8c8c8" stroke-width="0.7"/><path d="M216.5 18.3 Q230.5 43.1 239.9 76.4" stroke="#828282" stroke-width="0.7"/><path d="M-89.3 82.1 Q-104.8 94.4 -115.5 115.1" stroke="#d0d0d0" stroke-width="0.7"/><path d="M278.8 37.7 Q307.7 67 328.6 109.5" stroke="#bcbcbc" stroke-width="0.6"/><path d="M340.9 4.8 Q378 18.8 412 46.7" stroke="#cecece" stroke-width="0.8"/><path d="M-135 22.9 Q-191.5 38 -232.4 84.5" stroke="#c8c8c8" stroke-width="0.5"/><path d="M-65.3 41.3 Q-114.1 67.6 -146.7 118" stroke="#d0d0d0" stroke-width="1"/><path d="M74.1 -20 Q57.4 -6.4 43.5 15" stroke="#c8c8c8" stroke-width="0.8"/><path d="M217.9 -16.3 Q233.1 -0.9 244.3 22.3" stroke="#cecece" stroke-width="0.5"/><path d="M471.9 51.1 Q526.1 69.5 558.2 120.2" stroke="#c0c0c0" stroke-width="0.8"/><path d="M67.6 123.4 Q58.6 153.2 52.8 191.4" stroke="#8c8c8c" stroke-width="0.8"/><path d="M115.5 24.2 Q105 64 99.2 114.1" stroke="#8c8c8c" stroke-width="0.8"/><path d="M78.3 69 Q64.5 105.2 54.1 151.3" stroke="#868686" stroke-width="0.8"/><path d="M-1.5 0.3 Q-35.7 16.8 -56.2 52.5" stroke="#c8c8c8" stroke-width="0.6"/><path d="M212.5 10.5 Q230.8 41.5 239.4 83.6" stroke="#929292" stroke-width="0.5"/><path d="M25.8 -19.9 Q-28.8 0.6 -73.1 45.5" stroke="#868686" stroke-width="0.8"/><path d="M340.2 104.8 Q356.4 124 369.9 150.9" stroke="#c8c8c8" stroke-width="0.6"/><path d="M114.9 72.9 Q110.3 100.3 107.6 135" stroke="#bcbcbc" stroke-width="0.8"/><path d="M2.9 16.4 Q-37.7 42.7 -65.9 87.9" stroke="#d0d0d0" stroke-width="0.6"/><path d="M210.5 83.5 Q215.9 103.8 220.1 129.9" stroke="#828282" stroke-width="0.7"/><path d="M-26 39.1 Q-64.7 65.9 -87.9 112.2" stroke="#d6d6d6" stroke-width="0.7"/><path d="M-45.9 71.1 Q-86.5 105 -120 154.7" stroke="#c0c0c0" stroke-width="0.5"/><path d="M207.5 65.9 Q213.1 85.3 216.9 110.6" stroke="#828282" stroke-width="0.6"/><path d="M216.4 100.9 Q228.8 145 236.3 200.5" stroke="#929292" stroke-width="0.8"/><path d="M65.4 23.8 Q48.6 48.2 36.6 81.5" stroke="#bcbcbc" stroke-width="1"/><path d="M82.2 80.7 Q77.5 96.5 74.9 117.4" stroke="#d6d6d6" stroke-width="0.8"/><path d="M171.5 10.2 Q176.3 36.1 180 68.9" stroke="#828282" stroke-width="0.8"/><path d="M124.4 -3.7 Q111.6 42 102.5 99.2" stroke="#828282" stroke-width="0.6"/><path d="M10.7 -22.1 Q-24.2 -11.1 -45.1 22" stroke="#c8c8c8" stroke-width="0.5"/><path d="M378.1 10.9 Q415.7 23 437.9 58.8" stroke="#8c8c8c" stroke-width="1"/><path d="M83.2 48.9 Q65.8 90.4 56.1 143.7" stroke="#929292" stroke-width="0.8"/><path d="M160.1 -11.8 Q164.7 26.7 167.7 74.6" stroke="#c8c8c8" stroke-width="0.5"/><path d="M141.8 -3.5 Q139.5 24.9 137.8 60.8" stroke="#bcbcbc" stroke-width="1"/><path d="M265.3 -5.4 Q294.8 13.2 316.8 45.5" stroke="#828282" stroke-width="1"/><path d="M246.3 61.7 Q268.5 101.3 285.8 152.8" stroke="#868686" stroke-width="0.7"/><path d="M-149.6 23.5 Q-188.6 33.7 -224.5 60.2" stroke="#8c8c8c" stroke-width="0.7"/><path d="M-121.2 98.5 Q-164.7 128.6 -196.4 178" stroke="#cecece" stroke-width="1"/><path d="M273.3 54.9 Q295.1 82.9 312 121.2" stroke="#cecece" stroke-width="0.5"/><path d="M62.6 73.7 Q51 99.9 45.7 134.6" stroke="#d0d0d0" stroke-width="0.5"/><path d="M102.2 -16.7 Q93.1 -2.5 87.8 17.8" stroke="#bcbcbc" stroke-width="0.5"/><path d="M-29.3 4.7 Q-49.7 14 -68.3 31.7" stroke="#c8c8c8" stroke-width="0.6"/><path d="M378.7 69.6 Q411.8 92.5 430.1 133.1" stroke="#bcbcbc" stroke-width="1"/><path d="M-88.6 -2.6 Q-123.9 5.4 -156.6 28.5" stroke="#cecece" stroke-width="1"/><path d="M71.4 -6.8 Q56.7 8.4 45 30.8" stroke="#bcbcbc" stroke-width="0.8"/><path d="M-46.1 50.6 Q-87.2 78.7 -122.6 122.2" stroke="#c8c8c8" stroke-width="1"/><path d="M280.6 87.8 Q296.2 112.7 308.4 146.1" stroke="#8c8c8c" stroke-width="0.5"/><path d="M-134.3 80.8 Q-151.7 91.8 -166.1 111" stroke="#828282" stroke-width="0.8"/><path d="M295.8 -25 Q330 -15.9 353.2 14.5" stroke="#c8c8c8" stroke-width="0.8"/><path d="M295.9 -16.5 Q322 -7 345.1 14.2" stroke="#828282" stroke-width="0.6"/><path d="M309.4 114.1 Q335.3 152.3 354.3 203.3" stroke="#828282" stroke-width="0.7"/><path d="M-62.3 2.6 Q-118.9 19 -167.7 59.9" stroke="#929292" stroke-width="1"/><path d="M270 18.8 Q308.7 52.2 335.3 103.3" stroke="#c4c4c4" stroke-width="0.5"/><path d="M295.5 18.2 Q316 33 326.4 59.7" stroke="#8c8c8c" stroke-width="0.8"/><path d="M129.4 -0 Q122.5 33.4 117.8 75.5" stroke="#929292" stroke-width="0.5"/><path d="M-44.2 -4 Q-99.3 11.8 -140.6 56.8" stroke="#929292" stroke-width="0.6"/><path d="M166.5 33 Q169.8 63.5 172.2 101.8" stroke="#c8c8c8" stroke-width="0.7"/><path d="M34.3 6.6 Q16.7 21 2.6 43.6" stroke="#bcbcbc" stroke-width="0.6"/><path d="M117.8 52.4 Q109.9 94.5 104.1 147.1" stroke="#868686" stroke-width="0.7"/><path d="M289.3 31 Q321.2 58.1 341.8 100.5" stroke="#8c8c8c" stroke-width="0.8"/><path d="M148 14.2 Q147.5 45.3 147.1 84.3" stroke="#8c8c8c" stroke-width="1"/><path d="M-69.5 28.5 Q-99.8 42.7 -124.9 70.4" stroke="#828282" stroke-width="1"/><path d="M377.7 92.3 Q394.3 107.1 405.5 130.7" stroke="#bcbcbc" stroke-width="0.7"/><path d="M-26.5 87.8 Q-38.1 101.8 -44.9 122.8" stroke="#cecece" stroke-width="0.7"/><path d="M421.5 11.9 Q468.5 23.1 500.2 63.2" stroke="#c4c4c4" stroke-width="0.7"/><path d="M396 88.5 Q411.9 101.3 420.3 123.5" stroke="#bcbcbc" stroke-width="0.7"/><path d="M359.6 67.6 Q375.9 80.9 388.5 102.4" stroke="#929292" stroke-width="0.7"/><path d="M270.6 109.3 Q285.3 138.6 294.1 177.3" stroke="#d0d0d0" stroke-width="0.6"/><path d="M20.6 -20.6 Q-11.1 -8.8 -31.2 21.9" stroke="#868686" stroke-width="0.8"/><path d="M417.7 15.1 Q454.6 25.2 475.6 60" stroke="#929292" stroke-width="0.7"/><path d="M43.9 -23.7 Q16.3 -11 -6.4 14.4" stroke="#828282" stroke-width="0.6"/><path d="M93.3 -13.3 Q82.4 1.6 73.8 22.5" stroke="#c4c4c4" stroke-width="0.7"/><path d="M381.5 60.8 Q415.6 82.1 437.8 120.4" stroke="#cecece" stroke-width="1"/><path d="M-44.1 41.7 Q-83.6 66.6 -115 107.9" stroke="#929292" stroke-width="1"/><path d="M187.3 -17.1 Q209 23.3 220.8 76.7" stroke="#8c8c8c" stroke-width="0.5"/><path d="M-60.8 34.8 Q-102.2 56.3 -124 101.2" stroke="#d0d0d0" stroke-width="0.5"/><path d="M318.5 -13.2 Q368 1.1 409.1 38.8" stroke="#c0c0c0" stroke-width="0.8"/><path d="M50.5 39.1 Q24.9 74.8 11.3 124.3" stroke="#8c8c8c" stroke-width="1"/><path d="M457.6 62 Q490.6 76.4 509.1 110.5" stroke="#bcbcbc" stroke-width="0.8"/><path d="M143.6 79.8 Q143 102.7 142.6 131.7" stroke="#cecece" stroke-width="0.8"/><path d="M81.6 -15.6 Q49.7 14.8 32 61.3" stroke="#8c8c8c" stroke-width="0.6"/><path d="M106.1 126.6 Q100.3 163.7 96.7 210" stroke="#c4c4c4" stroke-width="0.5"/><path d="M295 16 Q312.4 28.5 323.7 50.8" stroke="#cecece" stroke-width="0.6"/><path d="M42.6 53.4 Q23.5 81.7 12.6 120.8" stroke="#c8c8c8" stroke-width="1"/><path d="M86.2 1.2 Q63.2 33.9 49.9 79" stroke="#cecece" stroke-width="0.6"/><path d="M113.1 19.3 Q102.3 55.4 93.8 100.9" stroke="#929292" stroke-width="0.6"/><path d="M88 5 Q59.8 48.5 45.1 107.3" stroke="#929292" stroke-width="0.6"/><path d="M296.8 -0.1 Q326.2 14.9 350.7 42.6" stroke="#c8c8c8" stroke-width="0.7"/><path d="M212.2 -2.3 Q228.3 20.6 235.9 53.2" stroke="#cecece" stroke-width="0.7"/><path d="M186.2 67.6 Q190.8 93 193.6 125.4" stroke="#c8c8c8" stroke-width="0.5"/><path d="M180.1 126.7 Q183.4 158.9 185.3 199.2" stroke="#868686" stroke-width="1"/><path d="M307.3 70.9 Q343.2 109.8 367.2 165.3" stroke="#bcbcbc" stroke-width="0.7"/><path d="M476.3 24.9 Q521.3 35.1 554.7 71.5" stroke="#d0d0d0" stroke-width="0.7"/><path d="M104 -5.6 Q83.5 32.1 66.4 80.7" stroke="#929292" stroke-width="0.6"/><path d="M224.7 8.2 Q249 40.3 261.7 85.4" stroke="#d0d0d0" stroke-width="0.6"/><path d="M399.5 42.8 Q427.5 56.2 446.7 84.7" stroke="#929292" stroke-width="0.6"/><path d="M77 36.1 Q66 58.1 57.3 87.1" stroke="#868686" stroke-width="0.7"/><path d="M217.7 -15.9 Q245.6 11.2 263.1 52" stroke="#929292" stroke-width="0.5"/><path d="M-59 6.8 Q-96.4 19.6 -129.4 48.1" stroke="#8c8c8c" stroke-width="1"/><path d="M125 -4.9 Q114.4 33.3 106.3 81.2" stroke="#d6d6d6" stroke-width="0.8"/><path d="M243.1 -30.1 Q276.6 -15.5 305.2 13.4" stroke="#868686" stroke-width="0.5"/><path d="M392.8 9.9 Q445 24.1 485.1 65.7" stroke="#cecece" stroke-width="0.7"/><path d="M248.8 -30.8 Q294 -13.9 320.6 29.7" stroke="#c0c0c0" stroke-width="0.8"/><path d="M485.6 27.9 Q510.7 34.5 528.4 57.3" stroke="#929292" stroke-width="0.7"/><path d="M447.5 14.6 Q493.9 24.6 529.7 61" stroke="#d6d6d6" stroke-width="0.5"/><path d="M123.4 59.1 Q119.1 89.3 116.5 127.2" stroke="#d0d0d0" stroke-width="0.6"/><path d="M-183 36.1 Q-226.5 47.7 -254.8 86" stroke="#c8c8c8" stroke-width="0.7"/><path d="M99.8 27.9 Q87.2 61.6 81.3 105" stroke="#d6d6d6" stroke-width="0.6"/><path d="M245.3 31.3 Q274.8 70.6 299.6 122.8" stroke="#c4c4c4" stroke-width="0.6"/><path d="M51.4 48.1 Q41.2 65 35.1 88.6" stroke="#868686" stroke-width="1"/><path d="M105.8 45.6 Q96.8 78.6 91.2 120.4" stroke="#929292" stroke-width="0.7"/><path d="M271.9 -12 Q321.4 11.8 356.3 59.6" stroke="#c0c0c0" stroke-width="0.6"/><path d="M16.8 -0.1 Q-1.9 11.3 -14.9 32.8" stroke="#8c8c8c" stroke-width="0.8"/><path d="M294.6 39.6 Q322.9 65.3 339.9 105.1" stroke="#bcbcbc" stroke-width="1"/><path d="M92.5 110.4 Q83.9 148.6 79.4 196.5" stroke="#cecece" stroke-width="1"/><path d="M111.4 89 Q104.4 130 98.8 181" stroke="#bcbcbc" stroke-width="0.5"/><path d="M179.8 84 Q184.3 118.1 186.4 160.7" stroke="#c4c4c4" stroke-width="1"/><path d="M158 -4.4 Q160.3 24 161.7 59.8" stroke="#929292" stroke-width="0.6"/><path d="M248.1 -35.3 Q294.1 -20.8 320.6 22.4" stroke="#d6d6d6" stroke-width="0.7"/><path d="M260.6 -16 Q310.2 8.7 353.5 52" stroke="#c4c4c4" stroke-width="1"/><path d="M397 47.7 Q426.1 62.6 448.8 91.3" stroke="#868686" stroke-width="0.5"/><path d="M52.9 -10.9 Q26.2 7.9 10.1 40.7" stroke="#868686" stroke-width="0.8"/><path d="M388.7 13 Q410 20.6 426 40.6" stroke="#828282" stroke-width="0.5"/><path d="M467.7 35.6 Q495.2 44.2 517.9 66.8" stroke="#d6d6d6" stroke-width="0.5"/><path d="M-46 43.3 Q-64.4 56.1 -80.6 76.7" stroke="#c0c0c0" stroke-width="0.5"/><path d="M46.4 -0.2 Q15.5 24.1 -8.2 61.8" stroke="#d0d0d0" stroke-width="0.8"/><path d="M-46.6 44.6 Q-69.7 60.3 -81.3 89.3" stroke="#8c8c8c" stroke-width="0.8"/><path d="M327.7 -16.8 Q351.7 -10.1 370.6 10.4" stroke="#c8c8c8" stroke-width="0.5"/><path d="M385 24.3 Q427.4 40.6 457.4 79.2" stroke="#d6d6d6" stroke-width="0.6"/><path d="M44.1 47.3 Q30 68 23.2 97.4" stroke="#bcbcbc" stroke-width="0.5"/><path d="M235.8 62.2 Q247.6 86.9 256.8 119.1" stroke="#828282" stroke-width="0.5"/><path d="M368.5 85 Q403.8 114.1 430.2 158.5" stroke="#d6d6d6" stroke-width="0.8"/><path d="M-13.3 -7.9 Q-43.8 3.4 -67 30.8" stroke="#c4c4c4" stroke-width="0.5"/><path d="M354.7 100.7 Q383 129.3 400.5 171.9" stroke="#d0d0d0" stroke-width="0.6"/><path d="M245.7 19.2 Q268.9 46.2 286.5 84.1" stroke="#828282" stroke-width="1"/><path d="M123.6 123 Q118.9 172.1 115 232.7" stroke="#bcbcbc" stroke-width="0.5"/><path d="M-102.1 56.8 Q-141 77.4 -166.9 117.7" stroke="#868686" stroke-width="0.7"/><path d="M38.5 7.6 Q0.7 38 -30.4 83.4" stroke="#c0c0c0" stroke-width="0.7"/><path d="M-24.2 -11.3 Q-56.6 -1.3 -76.9 29.2" stroke="#c4c4c4" stroke-width="0.7"/><path d="M-89.2 50 Q-117.1 65.3 -134.8 95.7" stroke="#d0d0d0" stroke-width="0.7"/><path d="M-108.7 54.1 Q-143.4 71.6 -163 108.9" stroke="#c4c4c4" stroke-width="0.7"/><path d="M269.7 -3.8 Q316 23.6 345.7 74" stroke="#929292" stroke-width="0.8"/><path d="M232.8 99.5 Q249.2 144.8 259.1 202.4" stroke="#cecece" stroke-width="0.7"/><path d="M60.2 16.7 Q35.9 46.1 21.3 88" stroke="#868686" stroke-width="0.5"/><path d="M-74.9 21.9 Q-94.6 30.8 -111.7 48.9" stroke="#828282" stroke-width="0.7"/><path d="M-31.5 -16 Q-81.9 -4.3 -123.1 33.2" stroke="#c0c0c0" stroke-width="0.8"/><path d="M215.8 7.9 Q242.8 48.7 260.1 103.6" stroke="#cecece" stroke-width="0.7"/><path d="M214.5 -18.9 Q227.9 -5.2 237.1 15.9" stroke="#828282" stroke-width="0.7"/><path d="M-70.7 44.8 Q-93.1 58.1 -107 83.9" stroke="#cecece" stroke-width="1"/><path d="M255.9 -32.3 Q306.5 -16.4 343.7 26.3" stroke="#cecece" stroke-width="0.5"/><path d="M326 43.4 Q368.3 74 395.2 124.9" stroke="#c8c8c8" stroke-width="0.6"/><path d="M300.2 110.2 Q309.3 125.4 315.2 146.6" stroke="#828282" stroke-width="0.7"/><path d="M398.3 81.2 Q439.2 108.9 474.1 152.1" stroke="#828282" stroke-width="0.7"/><path d="M-91.2 110.5 Q-115.5 132.5 -127.7 167.7" stroke="#c8c8c8" stroke-width="0.5"/><path d="M-71.3 18.9 Q-127.4 39.8 -178.2 81.2" stroke="#828282" stroke-width="0.7"/><path d="M228.8 -25.4 Q250.8 -10.9 266 14.9" stroke="#c0c0c0" stroke-width="0.7"/><path d="M-4.3 28.5 Q-35.8 51.5 -56.5 89.9" stroke="#bcbcbc" stroke-width="0.6"/><path d="M45.5 72.3 Q32 97.1 24.4 130.6" stroke="#8c8c8c" stroke-width="0.8"/><path d="M-45.5 84.5 Q-66.3 104.9 -78.1 136.4" stroke="#d6d6d6" stroke-width="1"/><path d="M281.1 55.4 Q314.7 94.9 341.7 148.6" stroke="#c8c8c8" stroke-width="1"/><path d="M167.5 78.2 Q170.9 120.1 173.3 171.9" stroke="#d0d0d0" stroke-width="0.6"/><path d="M243.6 130.6 Q259.3 176.3 268.7 234.3" stroke="#c0c0c0" stroke-width="0.5"/><path d="M132.7 12.8 Q126.6 54.6 122.1 106.5" stroke="#828282" stroke-width="0.7"/><path d="M-49.4 107 Q-83.3 143.4 -101.1 197" stroke="#cecece" stroke-width="1"/><path d="M435.7 22.6 Q463.3 30.9 479.1 57.9" stroke="#d6d6d6" stroke-width="0.6"/><path d="M83.5 34.6 Q64.2 74.7 51.5 126.5" stroke="#868686" stroke-width="0.5"/><path d="M400.8 46.1 Q419.2 55.9 431.6 76.4" stroke="#929292" stroke-width="0.7"/><path d="M375.1 14.6 Q408.6 26.7 428.3 59.7" stroke="#d0d0d0" stroke-width="0.6"/><path d="M244.3 -39.2 Q291.3 -26.3 332.1 7.6" stroke="#868686" stroke-width="0.6"/><path d="M243.6 45.2 Q257.4 68 264.4 99.4" stroke="#d6d6d6" stroke-width="0.6"/><path d="M-141.2 19.5 Q-178.9 29.2 -201.7 63.8" stroke="#8c8c8c" stroke-width="0.6"/><path d="M21 9.4 Q-4.1 27.4 -21.7 57.7" stroke="#c4c4c4" stroke-width="0.6"/><path d="M269.6 72 Q297.8 114.7 319.4 170.9" stroke="#c8c8c8" stroke-width="0.6"/><path d="M-84.4 58.4 Q-100.9 69.4 -110.8 90.1" stroke="#d6d6d6" stroke-width="0.6"/><path d="M172.9 3.8 Q183.3 50.4 189.2 108.6" stroke="#c0c0c0" stroke-width="0.6"/><path d="M58.2 -40.8 Q2.6 -26.5 -47.7 10.7" stroke="#868686" stroke-width="0.5"/><path d="M13.9 43.5 Q-8.6 66.6 -24.4 100.6" stroke="#d0d0d0" stroke-width="0.8"/><path d="M-152.8 76.3 Q-169.7 86 -183.7 103.9" stroke="#d0d0d0" stroke-width="0.5"/><path d="M365.1 2.8 Q392 11.5 413.4 34.5" stroke="#c0c0c0" stroke-width="0.5"/><path d="M459.7 40.2 Q479.5 47.6 497.3 64" stroke="#d6d6d6" stroke-width="0.6"/><path d="M143.5 -17.7 Q141.6 5.7 140.4 35.5" stroke="#d0d0d0" stroke-width="1"/><path d="M149.8 -2.7 Q149.7 25.1 149.6 60.1" stroke="#c0c0c0" stroke-width="0.7"/><path d="M-154.6 28.9 Q-212.6 44.2 -263.4 84.7" stroke="#c0c0c0" stroke-width="0.7"/><path d="M98.9 -16.5 Q83.2 5 75.7 35.9" stroke="#c4c4c4" stroke-width="1"/><path d="M433.8 30.8 Q490.1 48.1 537.9 90.1" stroke="#868686" stroke-width="0.5"/><path d="M54.3 63.9 Q37.3 95.5 27.4 137.5" stroke="#8c8c8c" stroke-width="0.8"/><path d="M199.6 64.1 Q207 92.4 212.7 128.2" stroke="#929292" stroke-width="0.8"/><path d="M-92.6 91.5 Q-126.3 117.4 -152.9 157.5" stroke="#bcbcbc" stroke-width="0.7"/><path d="M6.4 88.4 Q-24.5 131.2 -40.8 190.2" stroke="#d0d0d0" stroke-width="0.5"/><path d="M381.5 28 Q399.3 36.5 410.9 55.9" stroke="#929292" stroke-width="1"/><path d="M271.2 77.7 Q290.5 108.5 304.6 149.5" stroke="#828282" stroke-width="0.5"/><path d="M169 77.2 Q171.8 108.9 173.8 148.6" stroke="#bcbcbc" stroke-width="0.8"/><path d="M321.3 64.1 Q354.8 95.2 378.9 141.3" stroke="#c0c0c0" stroke-width="0.8"/><path d="M-7.1 -20.4 Q-52.2 -8.6 -81.5 31.3" stroke="#c0c0c0" stroke-width="1"/><path d="M4.5 119.8 Q-17.8 157.6 -34.3 207.1" stroke="#d6d6d6" stroke-width="0.7"/><path d="M136.9 51.8 Q135.2 75.1 133.9 104.8" stroke="#bcbcbc" stroke-width="0.7"/><path d="M134.9 59.4 Q131.4 102.5 128.8 156" stroke="#cecece" stroke-width="0.6"/><path d="M-14.7 31.8 Q-50.1 56.4 -70.1 99.6" stroke="#d0d0d0" stroke-width="0.5"/><path d="M237.8 35.5 Q263.8 75.5 281.5 128.9" stroke="#929292" stroke-width="0.6"/><path d="M49.4 35.8 Q31.6 60.1 20.9 94.3" stroke="#bcbcbc" stroke-width="1"/><path d="M287.1 78.1 Q302.5 100 314 130.2" stroke="#d6d6d6" stroke-width="0.5"/><path d="M180.1 53.8 Q187.4 96.2 191.3 149" stroke="#cecece" stroke-width="0.5"/><path d="M60.6 36.2 Q41.4 65.9 26.8 105.6" stroke="#868686" stroke-width="1"/><path d="M231.6 39.3 Q239.6 54.6 245.7 75.3" stroke="#828282" stroke-width="0.7"/><path d="M280.7 -21.4 Q326.9 -5.7 365.7 30.5" stroke="#868686" stroke-width="0.7"/><path d="M352.2 93.5 Q366.5 108.5 375.4 131.6" stroke="#c0c0c0" stroke-width="0.6"/><path d="M443 77.7 Q469.1 92.3 485 121.5" stroke="#c8c8c8" stroke-width="0.8"/><path d="M36.3 115.4 Q30.4 159.5 33.7 203.6" stroke="#828282" stroke-width="0.8"/><path d="M35 91 Q24.9 133.8 27.6 176.5" stroke="#828282" stroke-width="0.8"/><path d="M19.4 130.4 Q12.6 147.8 14.6 165.2" stroke="#929292" stroke-width="1"/><path d="M42.8 116 Q32.2 131.8 28.2 147.5" stroke="#d6d6d6" stroke-width="1"/><path d="M53.9 149.3 Q42.3 169.6 45.7 189.9" stroke="#929292" stroke-width="1"/><path d="M23.3 11.3 Q10.6 33.3 10.8 55.3" stroke="#bcbcbc" stroke-width="0.5"/><path d="M66 56.2 Q58.6 82.8 59.9 109.5" stroke="#c0c0c0" stroke-width="0.6"/><path d="M61.8 12.2 Q55.6 42.1 51.8 72" stroke="#c4c4c4" stroke-width="1"/><path d="M19 109.5 Q5.6 139 7.4 168.5" stroke="#929292" stroke-width="0.6"/><path d="M69.9 132.1 Q57.9 151.4 56.5 170.8" stroke="#bcbcbc" stroke-width="0.5"/><path d="M26.1 82.8 Q16.3 100.4 16.5 118" stroke="#d0d0d0" stroke-width="0.8"/><path d="M46 68.8 Q35.9 85.4 36.9 101.9" stroke="#929292" stroke-width="1"/><path d="M62.3 38.3 Q55.8 54.8 56.7 71.4" stroke="#868686" stroke-width="1"/><path d="M51.4 29.8 Q40.2 72.7 39.5 115.6" stroke="#d6d6d6" stroke-width="0.5"/><path d="M55.4 19.5 Q52.9 63 53.3 106.6" stroke="#c8c8c8" stroke-width="0.8"/><path d="M27.9 38.1 Q23.6 59.4 19.7 80.6" stroke="#828282" stroke-width="1"/><path d="M37.9 38.5 Q25.3 59.6 25.7 80.7" stroke="#d0d0d0" stroke-width="0.5"/><path d="M18.6 20.1 Q5 53 4.6 85.8" stroke="#bcbcbc" stroke-width="0.6"/><path d="M42.9 104.5 Q30.9 128.3 31.5 152.2" stroke="#cecece" stroke-width="0.6"/><path d="M58 82.3 Q45.6 111.2 46 140.2" stroke="#c0c0c0" stroke-width="0.5"/><path d="M38.4 46.1 Q30.3 88.2 27.2 130.4" stroke="#cecece" stroke-width="0.5"/><path d="M65.9 32.4 Q62 60.8 62 89.2" stroke="#828282" stroke-width="0.8"/><path d="M54.2 53.3 Q44.5 76.1 42.1 98.8" stroke="#c4c4c4" stroke-width="0.6"/><path d="M67.1 42.3 Q56 86.5 55.7 130.8" stroke="#cecece" stroke-width="0.8"/><path d="M28.1 23.1 Q21.1 52 18.4 81" stroke="#929292" stroke-width="0.8"/><path d="M52.7 126 Q50.2 144.7 49.1 163.3" stroke="#d0d0d0" stroke-width="0.5"/><path d="M31.7 115.1 Q27.7 144.9 24.8 174.8" stroke="#c0c0c0" stroke-width="0.6"/><path d="M42.2 93.7 Q27.8 124.9 28.1 156.1" stroke="#cecece" stroke-width="1"/><path d="M30.6 128.4 Q22.8 150.2 16.1 172" stroke="#c8c8c8" stroke-width="0.5"/><path d="M68.2 142.2 Q57.2 176.9 61.4 211.6" stroke="#868686" stroke-width="0.8"/><path d="M40.3 113.9 Q35.8 134.3 34.8 154.7" stroke="#8c8c8c" stroke-width="0.5"/><path d="M55.1 114.6 Q44.2 133 46.7 151.4" stroke="#929292" stroke-width="1"/><path d="M17.9 91.1 Q14.2 118.5 15.4 145.9" stroke="#929292" stroke-width="0.8"/><path d="M20.1 112.8 Q11.3 138.6 7.9 164.4" stroke="#c0c0c0" stroke-width="0.8"/><path d="M16.3 127.1 Q4.8 151.3 5.2 175.4" stroke="#c0c0c0" stroke-width="0.6"/><path d="M22.3 85 Q13.6 103.6 13.4 122.1" stroke="#cecece" stroke-width="0.5"/><path d="M43.4 37.7 Q33.4 64.8 36.2 91.9" stroke="#cecece" stroke-width="0.6"/><path d="M55.2 43.6 Q43.3 61.4 45.7 79.3" stroke="#c8c8c8" stroke-width="1"/><path d="M58.8 39.5 Q45.5 76.8 46.9 114.2" stroke="#cecece" stroke-width="0.6"/><path d="M61.4 69.4 Q46.3 103.1 45.4 136.8" stroke="#828282" stroke-width="0.5"/><path d="M20.6 42.7 Q13.8 75.6 10.5 108.5" stroke="#c8c8c8" stroke-width="0.6"/><path d="M19.9 23.7 Q14.8 45.2 13.2 66.6" stroke="#cecece" stroke-width="0.8"/><path d="M34.5 74.7 Q19.9 117.3 21.1 159.9" stroke="#929292" stroke-width="1"/><path d="M17.7 30.7 Q4.6 61.1 4.7 91.4" stroke="#868686" stroke-width="0.6"/><path d="M27 106 Q12.1 142.3 12.1 178.6" stroke="#c8c8c8" stroke-width="1"/><path d="M18 56.2 Q10.2 73.3 8.7 90.3" stroke="#c0c0c0" stroke-width="0.6"/><path d="M62.8 61.2 Q58.7 88.5 60.1 115.9" stroke="#868686" stroke-width="0.6"/><path d="M59.4 118.1 Q49 148 50.5 177.9" stroke="#8c8c8c" stroke-width="0.5"/><path d="M56.2 122.3 Q44.9 155 42.6 187.7" stroke="#d0d0d0" stroke-width="0.8"/><path d="M56.4 101.7 Q43.8 135.7 46.1 169.7" stroke="#8c8c8c" stroke-width="0.6"/><path d="M29 88.6 Q20.5 130 18.7 171.3" stroke="#d0d0d0" stroke-width="0.5"/><path d="M37.2 121.1 Q30.2 156.6 24.2 192.1" stroke="#929292" stroke-width="1"/><path d="M67.2 104.1 Q61.9 142.8 62 181.6" stroke="#929292" stroke-width="0.8"/><path d="M16.2 12.3 Q10.3 30.6 7.4 48.9" stroke="#929292" stroke-width="1"/><path d="M48.7 57 Q39.3 78.4 40.3 99.8" stroke="#d6d6d6" stroke-width="0.5"/><path d="M31.8 47.9 Q25.7 84 28.5 120" stroke="#d0d0d0" stroke-width="0.6"/><path d="M22.5 15.8 Q10.2 55.5 11 95.2" stroke="#8c8c8c" stroke-width="0.8"/><path d="M67.7 41.4 Q61.1 83.1 60.6 124.8" stroke="#929292" stroke-width="0.8"/><path d="M43 80.9 Q28.8 125.6 27.6 170.3" stroke="#cecece" stroke-width="1"/><path d="M44.5 34.5 Q39.1 77.9 42.5 121.2" stroke="#d0d0d0" stroke-width="0.8"/><path d="M55.8 147.8 Q48.1 184.9 44.3 221.9" stroke="#d0d0d0" stroke-width="1"/><path d="M23.3 45.5 Q13.1 72.9 10.7 100.4" stroke="#868686" stroke-width="1"/><path d="M30.4 52.7 Q24.8 89 24.2 125.3" stroke="#bcbcbc" stroke-width="0.5"/><path d="M65 60.9 Q53 105.2 56 149.5" stroke="#d0d0d0" stroke-width="0.5"/><path d="M46.1 115.2 Q39.8 156.9 37.8 198.6" stroke="#d6d6d6" stroke-width="0.5"/><path d="M67.2 11 Q57 54.1 58.4 97.2" stroke="#c4c4c4" stroke-width="0.5"/><path d="M69.9 92.5 Q64.7 137 65.4 181.5" stroke="#c4c4c4" stroke-width="0.8"/><path d="M57.7 86.7 Q49.2 114 55.4 141.2" stroke="#d0d0d0" stroke-width="1"/><path d="M42.6 60.4 Q29.4 102.5 27 144.6" stroke="#828282" stroke-width="1"/><path d="M60.6 58.6 Q50.2 77.8 47.5 97" stroke="#c8c8c8" stroke-width="0.6"/><path d="M365.2 105.4 Q373.1 147.6 371.5 189.9" stroke="#929292" stroke-width="0.8"/><path d="M401.9 53.3 Q404.6 96.6 404.1 139.9" stroke="#868686" stroke-width="1"/><path d="M370.6 60.7 Q381 85.2 378.8 109.8" stroke="#d6d6d6" stroke-width="0.8"/><path d="M354.3 97.2 Q363.1 127.2 365.4 157.3" stroke="#cecece" stroke-width="0.8"/><path d="M350.5 85 Q358.9 119.8 353.8 154.7" stroke="#929292" stroke-width="0.5"/><path d="M363.4 138.4 Q367.9 169.3 367.8 200.2" stroke="#d0d0d0" stroke-width="0.5"/><path d="M362.5 15.8 Q371.7 55.6 371.8 95.4" stroke="#868686" stroke-width="0.8"/><path d="M362.9 19.8 Q370.4 51.2 365.8 82.7" stroke="#d0d0d0" stroke-width="1"/><path d="M394.7 140.2 Q400.4 160.2 403.3 180.2" stroke="#d0d0d0" stroke-width="0.5"/><path d="M391.4 141.6 Q396.5 178.9 396.1 216.2" stroke="#929292" stroke-width="1"/><path d="M393.1 36 Q399.5 77.2 397.3 118.3" stroke="#bcbcbc" stroke-width="1"/><path d="M385.5 28.7 Q391.4 53.9 396.3 79" stroke="#929292" stroke-width="0.5"/><path d="M376.1 103.5 Q384.5 135.8 386.3 168.2" stroke="#828282" stroke-width="0.8"/><path d="M392 129.4 Q397.8 148.4 400.1 167.4" stroke="#c4c4c4" stroke-width="0.5"/><path d="M398.3 114 Q408.9 153.7 409.1 193.3" stroke="#8c8c8c" stroke-width="0.6"/><path d="M384.3 63.8 Q395.2 105.7 394.8 147.6" stroke="#828282" stroke-width="0.8"/><path d="M382 53.3 Q392 79.1 392.9 104.9" stroke="#c0c0c0" stroke-width="0.8"/><path d="M349.3 27.1 Q354.2 70.7 355.5 114.3" stroke="#d6d6d6" stroke-width="0.6"/><path d="M373 146.8 Q380.8 179.5 379.1 212.2" stroke="#c8c8c8" stroke-width="0.5"/><path d="M378.1 77.7 Q388.4 101.5 383.7 125.4" stroke="#868686" stroke-width="0.6"/><path d="M360.2 39.3 Q371.4 79.4 369.7 119.6" stroke="#bcbcbc" stroke-width="0.5"/><path d="M360.5 123.5 Q364.5 146.6 362.6 169.6" stroke="#d0d0d0" stroke-width="0.8"/><path d="M388.6 66 Q396.8 96.4 395.6 126.7" stroke="#c4c4c4" stroke-width="0.5"/><path d="M393 56.1 Q399.4 100.7 404.6 145.3" stroke="#d6d6d6" stroke-width="0.6"/><path d="M372.2 133.3 Q379.5 166.8 383.8 200.3" stroke="#828282" stroke-width="0.6"/><path d="M354.3 116.3 Q362.4 133.6 356.3 150.9" stroke="#c8c8c8" stroke-width="1"/><path d="M391.5 114 Q397.9 152.2 401 190.4" stroke="#8c8c8c" stroke-width="0.5"/><path d="M399.5 110.7 Q405.5 127.6 408.2 144.5" stroke="#c8c8c8" stroke-width="0.8"/><path d="M379.2 89.2 Q385.8 113.6 386.8 138.1" stroke="#c0c0c0" stroke-width="0.5"/><path d="M389.4 68.9 Q399.3 84.8 397.7 100.7" stroke="#c0c0c0" stroke-width="0.8"/><path d="M354 118.8 Q362.8 148 355.8 177.1" stroke="#868686" stroke-width="0.8"/><path d="M374.7 28 Q384.1 46.2 384.5 64.5" stroke="#bcbcbc" stroke-width="1"/><path d="M359.7 13 Q366.9 55.2 362.7 97.5" stroke="#bcbcbc" stroke-width="1"/><path d="M391.4 32.5 Q399.2 74.4 400.1 116.3" stroke="#cecece" stroke-width="0.5"/><path d="M354.2 84.4 Q365.1 100.2 363 116" stroke="#c0c0c0" stroke-width="1"/><path d="M391.7 90.2 Q399.8 132.6 394.1 175" stroke="#868686" stroke-width="1"/><path d="M375.1 38.8 Q386.2 61.1 382.8 83.4" stroke="#929292" stroke-width="0.5"/><path d="M353.5 142.3 Q363.3 170.5 364 198.7" stroke="#d0d0d0" stroke-width="1"/><path d="M390.7 110.7 Q395.4 151.5 397.5 192.4" stroke="#d0d0d0" stroke-width="0.6"/><path d="M388.1 133.3 Q391.9 166.5 393.8 199.6" stroke="#d6d6d6" stroke-width="1"/><path d="M351.5 148.2 Q356.1 170 354.4 191.9" stroke="#c4c4c4" stroke-width="0.5"/><path d="M361.6 38 Q370.8 53 372.5 68.1" stroke="#929292" stroke-width="0.6"/><path d="M400.7 118.5 Q410.9 134.9 412.2 151.2" stroke="#828282" stroke-width="1"/><path d="M362.7 12.6 Q364.5 50.3 364.6 88" stroke="#c0c0c0" stroke-width="0.6"/><path d="M356 96.2 Q363.3 120.9 362.4 145.6" stroke="#929292" stroke-width="0.5"/><path d="M352 100.8 Q356.7 118.3 352.4 135.9" stroke="#828282" stroke-width="0.5"/><path d="M387.5 96.1 Q396.9 124.8 395.5 153.5" stroke="#bcbcbc" stroke-width="0.6"/><path d="M349.3 123.6 Q355.3 152.4 359.3 181.1" stroke="#d0d0d0" stroke-width="0.6"/><path d="M385.6 95.8 Q395.7 113.4 397.4 131" stroke="#d0d0d0" stroke-width="0.5"/><path d="M352.9 133.4 Q355.1 177.9 355.8 222.4" stroke="#8c8c8c" stroke-width="0.8"/><path d="M365.3 79.2 Q369.8 111.5 368.9 143.8" stroke="#c4c4c4" stroke-width="0.5"/><path d="M352.4 105.6 Q354.4 143.6 352.9 181.6" stroke="#929292" stroke-width="1"/><path d="M403.1 90.4 Q414.7 111.8 414.2 133.1" stroke="#c0c0c0" stroke-width="0.5"/><path d="M394.9 14.3 Q406 49.7 403.5 85.1" stroke="#929292" stroke-width="0.5"/><path d="M358.1 71.8 Q365.7 108 369.4 144.2" stroke="#8c8c8c" stroke-width="0.8"/><path d="M349.6 32.7 Q359.5 52.6 354.2 72.5" stroke="#d0d0d0" stroke-width="1"/><path d="M390.7 149.2 Q397.9 186.8 400.7 224.4" stroke="#c4c4c4" stroke-width="0.5"/><path d="M371.1 42.3 Q378.6 83.9 371.3 125.5" stroke="#868686" stroke-width="0.5"/><path d="M391.1 134.6 Q400 173.4 400.4 212.3" stroke="#c0c0c0" stroke-width="0.5"/><path d="M394.2 97.8 Q400.4 123.8 398 149.8" stroke="#d6d6d6" stroke-width="0.6"/><path d="M359.8 102.9 Q367.5 125.2 360.5 147.6" stroke="#bcbcbc" stroke-width="0.5"/><path d="M384.3 115.7 Q391.3 157.3 386.9 198.8" stroke="#929292" stroke-width="0.5"/><path d="M403.4 71.3 Q410 106.9 405.5 142.5" stroke="#8c8c8c" stroke-width="1"/><path d="M361.9 13.9 Q365.1 49.6 365 85.3" stroke="#8c8c8c" stroke-width="0.6"/><path d="M384.7 107.3 Q388.8 131.4 391.9 155.5" stroke="#c0c0c0" stroke-width="0.5"/><path d="M352.1 88 Q357.7 124.7 353 161.4" stroke="#bcbcbc" stroke-width="0.8"/><path d="M399.6 136 Q405.4 158.6 405 181.3" stroke="#cecece" stroke-width="1"/><path d="M403.4 130.6 Q411.3 159.4 413.9 188.2" stroke="#c4c4c4" stroke-width="0.5"/><path d="M369.7 24.9 Q377.2 46.2 379.1 67.5" stroke="#868686" stroke-width="0.8"/><path d="M383 20.2 Q394.3 37.9 393.1 55.5" stroke="#d0d0d0" stroke-width="0.8"/></g>
<path d="M40 -5 Q28 50 22 99 Q17 140 18 166" fill="none" stroke="#8b8b8b" stroke-width="3.4" filter="url(#bl1)"/>
<path d="M46 -5 Q34 50 28 99 Q23 140 24 166" fill="none" stroke="#bdbdbd" stroke-width="2" filter="url(#bl1)"/>
<path d="M386 -5 Q396 20 402 60 Q406 110 401 160 Q399 180 392 199" fill="none" stroke="#8d8d8d" stroke-width="3" filter="url(#bl1)"/>
<path d="M380 -5 Q390 20 396 60 Q400 110 395 160" fill="none" stroke="#bababa" stroke-width="2" filter="url(#bl1)"/>
<path d="M17 168 Q17 196 24 212 Q31 240 49 270" fill="none" stroke="#bfbfbf" stroke-width="3" filter="url(#bl1)"/>
<path d="M20 170 Q21 196 28 212 Q34 238 50 264" fill="none" stroke="#878787" stroke-width="3.6" filter="url(#bl1)"/>
<path d="M26 176 Q28 200 34 214 Q38 232 48 250" fill="none" stroke="#b6b6b6" stroke-width="3" filter="url(#bl1)"/>
<path d="M393 200 Q386 238 372 268" fill="none" stroke="#c0c0c0" stroke-width="3" filter="url(#bl1)"/>
<path d="M390 198 Q383 234 370 262" fill="none" stroke="#8a8a8a" stroke-width="3.2" filter="url(#bl1)"/>
<path d="M384 196 Q378 226 372 244" fill="none" stroke="#b8b8b8" stroke-width="2.6" filter="url(#bl1)"/>
<path d="M49 268 Q70 340 100 392" fill="none" stroke="#939393" stroke-width="2.5" filter="url(#bl1)"/>
<path d="M371 268 Q364 330 322 400" fill="none" stroke="#939393" stroke-width="2.5" filter="url(#bl1)"/>
<path d="M-2 530 Q40 508 84 480 Q104 462 104 440 L112 404 L318 404 Q322 440 326 452 Q340 478 384 503 Q410 516 421 526 L421 594 L-2 594 Z" fill="#a6a6a6"/>
<path d="M-2 518 Q40 496 78 470 Q96 454 96 438 L104 396" fill="none" stroke="#c2c2c2" stroke-width="16" filter="url(#bl6)"/>
<path d="M-2 526 Q40 504 83 477 Q102 460 102 440 L110 400" fill="none" stroke="#cacaca" stroke-width="4" filter="url(#bl3)"/>
<path d="M421 514 Q410 504 388 492 Q348 470 334 448 Q330 438 326 396" fill="none" stroke="#bebebe" stroke-width="14" filter="url(#bl6)"/>
<path d="M421 522 Q410 512 385 499 Q342 476 328 451 Q324 440 320 400" fill="none" stroke="#c4c4c4" stroke-width="3.4" filter="url(#bl3)"/>
<path d="M-2 531 Q40 509 85 481 Q105 463 105 441 L113 404" fill="none" stroke="#8a8a8a" stroke-width="1.6" filter="url(#bl1)"/>
<path d="M421 527 Q410 517 383 504 Q339 479 325 453 Q321 441 317 404" fill="none" stroke="#8a8a8a" stroke-width="1.6" filter="url(#bl1)"/>
<path d="M112 404 Q130 440 185 461 Q215 468 260 452 Q300 426 314 404 Z" fill="#adadad"/>
<path d="M110 404 Q130 441 185 463 Q215 470 260 454 Q302 428 316 404" fill="none" stroke="#c9c9c9" stroke-width="2.2" filter="url(#bl1)"/>
<path d="M112 408 Q132 446 186 467 Q215 474 262 458 Q304 432 318 408" fill="none" stroke="#919191" stroke-width="2" filter="url(#bl1)"/>
<g fill="#7e7e7e" opacity=".7"><circle cx="192.3" cy="421.6" r=".7"/><circle cx="133.1" cy="430.7" r=".6"/><circle cx="164" cy="439.7" r=".7"/><circle cx="234.4" cy="431.8" r=".9"/><circle cx="217" cy="422.9" r=".9"/><circle cx="165.1" cy="442.5" r=".7"/><circle cx="162.7" cy="442.4" r=".9"/><circle cx="174.2" cy="438.9" r=".6"/><circle cx="262.9" cy="409.1" r=".7"/><circle cx="196.8" cy="439.5" r=".6"/><circle cx="209.1" cy="435.8" r=".7"/><circle cx="209.6" cy="453.3" r=".9"/><circle cx="213.4" cy="425.2" r="1"/><circle cx="219.4" cy="420.5" r=".6"/><circle cx="161.7" cy="430.4" r=".6"/><circle cx="147" cy="432.7" r=".6"/><circle cx="168.8" cy="435.8" r=".7"/><circle cx="238.8" cy="421.2" r=".6"/><circle cx="215.5" cy="431" r=".9"/><circle cx="178.6" cy="431.1" r=".9"/><circle cx="191.2" cy="426.4" r=".7"/><circle cx="178.6" cy="428.8" r="1"/><circle cx="275.2" cy="446.4" r=".6"/><circle cx="206.5" cy="435.3" r=".9"/><circle cx="208.7" cy="432.9" r=".9"/><circle cx="114.9" cy="433.7" r=".7"/><circle cx="242.3" cy="433.9" r=".9"/><circle cx="230.2" cy="433.6" r=".9"/><circle cx="258.9" cy="435.8" r="1"/><circle cx="181.2" cy="428.9" r=".6"/><circle cx="156.7" cy="412.3" r=".6"/><circle cx="169.1" cy="413.7" r=".6"/><circle cx="178" cy="426" r="1"/><circle cx="194.3" cy="422.4" r=".9"/><circle cx="247" cy="445.1" r=".9"/><circle cx="149.7" cy="447.1" r=".7"/><circle cx="202.9" cy="426" r="1"/><circle cx="217.8" cy="425.1" r=".7"/><circle cx="223.3" cy="420" r=".7"/><circle cx="222.2" cy="419.3" r=".9"/><circle cx="127.1" cy="413.8" r="1"/><circle cx="227.6" cy="429.1" r=".9"/><circle cx="231.2" cy="425.2" r="1"/><circle cx="152.8" cy="444.8" r="1"/><circle cx="192.7" cy="420.7" r=".7"/><circle cx="220.2" cy="440.7" r=".9"/><circle cx="247" cy="428" r=".7"/><circle cx="268" cy="424.8" r=".6"/><circle cx="175.9" cy="434.1" r=".6"/><circle cx="145.8" cy="419.4" r=".7"/><circle cx="205.3" cy="427.8" r=".9"/><circle cx="171.2" cy="419.5" r="1"/><circle cx="223.3" cy="434.8" r=".6"/><circle cx="199.1" cy="440.3" r=".7"/><circle cx="225.5" cy="427.9" r=".9"/><circle cx="214.8" cy="425.3" r=".7"/><circle cx="191.2" cy="430.3" r="1"/><circle cx="212.2" cy="419.1" r=".7"/><circle cx="194.7" cy="430.1" r=".6"/><circle cx="285.5" cy="422.7" r=".6"/><circle cx="232.2" cy="418.9" r="1"/><circle cx="245.1" cy="410.3" r=".6"/><circle cx="162.8" cy="432.7" r=".9"/><circle cx="283.3" cy="409.7" r=".7"/><circle cx="158.2" cy="434.3" r=".9"/><circle cx="183.3" cy="424.8" r=".9"/><circle cx="180.7" cy="418.3" r=".9"/><circle cx="198.5" cy="423.8" r=".6"/><circle cx="174.5" cy="418.5" r=".9"/><circle cx="206.6" cy="426.4" r="1"/><circle cx="170.6" cy="445.1" r=".7"/><circle cx="172.1" cy="430.3" r=".7"/><circle cx="221.2" cy="427.3" r=".7"/><circle cx="167.9" cy="424.8" r=".7"/><circle cx="227.4" cy="422.9" r=".9"/><circle cx="172.6" cy="437.6" r=".9"/><circle cx="223.8" cy="434.1" r=".7"/><circle cx="218.5" cy="423.9" r=".7"/><circle cx="244.3" cy="417" r=".6"/><circle cx="163.9" cy="430.5" r=".9"/><circle cx="173.5" cy="422.8" r="1"/><circle cx="177.6" cy="448.1" r=".6"/><circle cx="175.5" cy="409.3" r="1"/><circle cx="138.5" cy="450.5" r=".9"/><circle cx="232.9" cy="413.2" r=".7"/><circle cx="226.4" cy="447.3" r=".9"/><circle cx="191.5" cy="422.2" r=".6"/><circle cx="145.5" cy="414.1" r=".6"/><circle cx="207.1" cy="430" r="1"/><circle cx="200.4" cy="418.5" r=".6"/><circle cx="229.7" cy="432.7" r=".7"/><circle cx="208.7" cy="437.3" r=".7"/><circle cx="223.6" cy="428.7" r=".6"/><circle cx="226.2" cy="426.7" r=".9"/><circle cx="236.5" cy="432.9" r=".9"/><circle cx="167.3" cy="434.8" r=".9"/><circle cx="161.7" cy="451.8" r=".9"/><circle cx="213.7" cy="432.5" r=".6"/><circle cx="195.2" cy="419.1" r=".9"/><circle cx="180.9" cy="439.7" r=".7"/><circle cx="226.5" cy="409.2" r="1"/><circle cx="159.7" cy="440.6" r=".7"/><circle cx="199.5" cy="432.3" r="1"/><circle cx="246.9" cy="436.9" r=".7"/><circle cx="216.4" cy="415.3" r="1"/><circle cx="212.1" cy="419.6" r=".6"/><circle cx="224.5" cy="415.9" r="1"/><circle cx="221.1" cy="434" r=".7"/><circle cx="247" cy="438.7" r=".7"/><circle cx="205.2" cy="413.8" r=".9"/><circle cx="203.5" cy="425" r=".6"/><circle cx="210.7" cy="437.8" r="1"/><circle cx="143.5" cy="410.9" r=".7"/><circle cx="329.1" cy="424.6" r=".9"/><circle cx="214.2" cy="431.2" r="1"/><circle cx="214" cy="418.1" r=".9"/><circle cx="172.8" cy="426.5" r=".9"/><circle cx="215.2" cy="430" r=".7"/><circle cx="256.2" cy="450.6" r=".7"/><circle cx="180.5" cy="429.9" r=".6"/><circle cx="218.2" cy="409.4" r=".9"/><circle cx="188" cy="415.4" r=".9"/><circle cx="207.9" cy="422.4" r=".6"/><circle cx="176" cy="419" r=".6"/><circle cx="204.1" cy="445.8" r=".7"/><circle cx="134.4" cy="435.3" r="1"/><circle cx="209.7" cy="416.5" r="1"/><circle cx="216.3" cy="409.1" r=".9"/><circle cx="191.9" cy="424.2" r="1"/><circle cx="278.2" cy="442.2" r=".7"/><circle cx="309.2" cy="435.9" r=".7"/><circle cx="258.2" cy="435" r=".6"/><circle cx="200.6" cy="432.3" r=".9"/><circle cx="190.1" cy="429.9" r="1"/><circle cx="185.5" cy="410" r=".6"/><circle cx="286.7" cy="433.2" r=".7"/><circle cx="147.1" cy="424.5" r=".9"/><circle cx="229.1" cy="440.7" r="1"/><circle cx="216.4" cy="434.5" r="1"/><circle cx="195.6" cy="417" r=".7"/></g>
<path d="M118 503 Q140 540 171 586" fill="none" stroke="#b9b9b9" stroke-width="3" filter="url(#bl3)"/>
<path d="M277 508 Q268 545 262 590" fill="none" stroke="#bbbbbb" stroke-width="4" filter="url(#bl3)"/>
<path d="M286 508 Q276 545 270 590" fill="none" stroke="#9a9a9a" stroke-width="3" filter="url(#bl3)"/>
<path d="M0 560 Q80 545 150 575 Q170 584 176 592" fill="none" stroke="#b8b8b8" stroke-width="3" filter="url(#bl3)"/>
<path d="M419 556 Q340 548 290 580" fill="none" stroke="#b6b6b6" stroke-width="3" filter="url(#bl3)"/>
<circle cx="163" cy="588" r="1.6" fill="#555"/>
<clipPath id="bodyclip"><path d="M-2 530 Q40 508 84 480 Q104 462 104 440 L112 404 L318 404 Q322 440 326 452 Q340 478 384 503 Q410 516 421 526 L421 594 L-2 594 Z"/></clipPath>
<g clip-path="url(#bodyclip)"><rect x="0" y="400" width="419" height="192" filter="url(#mot)" opacity=".045"/></g>
<clipPath id="skinclip"><path d="M38 -5 Q26 50 20 99 Q15 140 16 165 Q18 200 24 211 Q30 240 48 269 Q70 340 100 392 Q140 448 215 466 Q300 440 340 392 Q364 330 372 270 Q386 240 394 199 Q402 175 403 160 Q408 110 404 60 Q398 20 388 -5 Z"/><path d="M-2 530 Q40 508 84 480 Q104 462 104 440 L112 404 L318 404 Q322 440 326 452 Q340 478 384 503 Q410 516 421 526 L421 594 L-2 594 Z"/></clipPath>
<g clip-path="url(#skinclip)"><rect width="419" height="592" filter="url(#gr)" opacity=".075"/></g>
<rect width="419" height="592" filter="url(#gr)" opacity=".02"/>
</g></svg>
<!--/DOC-->
<div id="statusbar" style="left:45px;top:702px;width:829px;height:21px;background:#4b4b4b;border-bottom:3px solid #2a2a2a">
<div style="left:0;top:0;width:47px;height:17px;background:#535353"></div>
<div style="left:233px;top:0;width:596px;height:17px;background:#4e4e4e"></div>
<div style="left:0;top:17px;width:829px;height:2px;background:#5c5c5c"></div>
<span style="left:4px;top:3px;font-size:11.4px;color:#e6e6e6">76.98%</span>
<span style="left:87px;top:3px;font-size:11.2px;color:#e0e0e0">文档:1.19M/1.59M</span>
<svg style="left:219px;top:4px" width="6" height="11" viewBox="0 0 6 11"><path d="M1 1 L5 5.5 L1 10" stroke="#c8c8c8" stroke-width="1.2" fill="none"/></svg>
</div>
<div id="toolbar" style="left:4px;top:69px;width:41px;height:654px;background:#535353;border-right:2px solid #3a3a3a">
<div style="left:1px;top:0;width:38px;height:12px;background:#424242"></div>
<svg style="left:5px;top:4px" width="9" height="5" viewBox="0 0 9 5"><path d="M0.5 0 L3.5 2.5 L0.5 5 Z M4.8 0 L7.8 2.5 L4.8 5 Z" fill="#cfcfcf"/></svg>
<div style="left:11px;top:15px;width:18px;height:4px;background:repeating-linear-gradient(to right,#6a6a6a 0,#6a6a6a 1px,#474747 1px,#474747 2px)"></div>
<div style="left:4px;top:523px;width:31px;height:24px;background:#383838;border-radius:2px"></div>
<svg style="left:10px;top:31.5px" width="20" height="20" viewBox="0 0 20 20"><path d="M10 1.5 L13 5 L11 5 L11 9 L15 9 L15 7 L18.5 10 L15 13 L15 11 L11 11 L11 15 L13 15 L10 18.5 L7 15 L9 15 L9 11 L5 11 L5 13 L1.5 10 L5 7 L5 9 L9 9 L9 5 L7 5 Z" fill="#dcdcdc"/></svg>
<div class="tri" style="left:28px;top:46.5px"></div>
<svg style="left:10px;top:57.5px" width="20" height="20" viewBox="0 0 20 20"><rect x="2.5" y="4" width="15.5" height="12.5" fill="none" stroke="#dcdcdc" stroke-width="1.3" stroke-dasharray="3.2 1.8"/></svg>
<div class="tri" style="left:28px;top:72.5px"></div>
<svg style="left:10px;top:83.5px" width="20" height="20" viewBox="0 0 20 20"><ellipse cx="11" cy="8" rx="7.6" ry="4.8" transform="rotate(-14 11 8)" fill="none" stroke="#dcdcdc" stroke-width="1.5"/><path d="M5 11.5 Q3.6 12.6 4.6 14 Q6.2 15.4 7.4 14.2 Q8 13 6.6 12.4 M6.6 14.6 Q7.4 16.8 5.6 18.6" fill="none" stroke="#dcdcdc" stroke-width="1.3"/></svg>
<div class="tri" style="left:28px;top:98.5px"></div>
<svg style="left:10px;top:109.5px" width="20" height="20" viewBox="0 0 20 20"><circle cx="7" cy="11.5" r="5.2" fill="none" stroke="#dcdcdc" stroke-width="1.4" stroke-dasharray="1.5 1.6"/><path d="M18.6 3 Q19.3 3.8 18.4 5 L14.3 11 L12 9.4 L17 3.6 Q17.9 2.5 18.6 3 Z M11.4 10.2 L13.7 11.9 Q13.6 14.6 11.6 15.4 Q9.4 16.2 7.8 15.2 Q9.6 14.4 9.6 12.6 Q9.8 10.8 11.4 10.2 Z" fill="#dcdcdc"/></svg>
<div class="tri" style="left:28px;top:124.5px"></div>
<svg style="left:10px;top:135.5px" width="20" height="20" viewBox="0 0 20 20"><path d="M5.5 1.5 L5.5 14.5 L18.5 14.5 M1.5 5.5 L14.5 5.5 L14.5 18.5" fill="none" stroke="#dcdcdc" stroke-width="2"/></svg>
<div class="tri" style="left:28px;top:150.5px"></div>
<svg style="left:10px;top:161.5px" width="20" height="20" viewBox="0 0 20 20"><rect x="3" y="3.5" width="14" height="13" fill="none" stroke="#dcdcdc" stroke-width="1.5"/><path d="M3 3.5 L17 16.5 M17 3.5 L3 16.5" stroke="#dcdcdc" stroke-width="1.3"/><rect x="1.8" y="2.3" width="2.4" height="2.4" fill="#dcdcdc"/><rect x="15.8" y="2.3" width="2.4" height="2.4" fill="#dcdcdc"/><rect x="1.8" y="15.3" width="2.4" height="2.4" fill="#dcdcdc"/><rect x="15.8" y="15.3" width="2.4" height="2.4" fill="#dcdcdc"/></svg>
<svg style="left:10px;top:187.5px" width="20" height="20" viewBox="0 0 20 20"><path d="M16.2 1.8 Q18.4 1.4 18.4 3.8 Q18.4 5 17 6.2 L15.6 7.6 L16.6 8.6 L15.2 10 L10 4.8 L11.4 3.4 L12.4 4.4 L13.8 3 Q15 1.8 16.2 1.8 Z" fill="#dcdcdc"/><path d="M12 7 L4.4 14.6 L3.6 17 L5.6 16 L13.4 8.4" fill="none" stroke="#dcdcdc" stroke-width="1.5"/></svg>
<div class="tri" style="left:28px;top:202.5px"></div>
<svg style="left:10px;top:213.5px" width="20" height="20" viewBox="0 0 20 20"><g transform="rotate(-45 10 10)"><rect x="1" y="6" width="18" height="8.4" rx="2.4" fill="#dcdcdc"/><rect x="7" y="7" width="6" height="6.4" fill="#535353"/><circle cx="8.6" cy="8.8" r=".8" fill="#dcdcdc"/><circle cx="11.4" cy="8.8" r=".8" fill="#dcdcdc"/><circle cx="8.6" cy="11.6" r=".8" fill="#dcdcdc"/><circle cx="11.4" cy="11.6" r=".8" fill="#dcdcdc"/></g><path d="M2.4 9 A5.4 5.4 0 0 1 9 2.4" fill="none" stroke="#dcdcdc" stroke-width="1.3" stroke-dasharray="1.4 1.5"/></svg>
<div class="tri" style="left:28px;top:228.5px"></div>
<svg style="left:10px;top:239.5px" width="20" height="20" viewBox="0 0 20 20"><path d="M17.8 1.8 Q18.8 2.6 17.9 3.9 L11.6 12 L9 10 L16 2.4 Q17 1.2 17.8 1.8 Z M8.2 10.8 L10.9 12.9 Q10.6 16 8.2 17.2 Q5.6 18.4 2.6 17.4 Q5 16.4 5.3 14.2 Q5.8 11.4 8.2 10.8 Z" fill="#dcdcdc"/></svg>
<div class="tri" style="left:28px;top:254.5px"></div>
<svg style="left:10px;top:265.5px" width="20" height="20" viewBox="0 0 20 20"><path d="M10 2 Q13 2 13 4.8 Q13 6.4 11.8 7.6 Q11.4 8.4 11.6 10 L16 10 Q17 10 17 11 L17 13.6 L3 13.6 L3 11 Q3 10 4 10 L8.4 10 Q8.6 8.4 8.2 7.6 Q7 6.4 7 4.8 Q7 2 10 2 Z" fill="#dcdcdc"/><rect x="3" y="15.4" width="14" height="1.8" fill="#dcdcdc"/></svg>
<div class="tri" style="left:28px;top:280.5px"></div>
<svg style="left:10px;top:291.5px" width="20" height="20" viewBox="0 0 20 20"><path d="M18.2 2 Q19.2 2.8 18.3 4 L12.8 11.4 L10.4 9.6 L16.5 2.6 Q17.4 1.4 18.2 2 Z M9.6 10.4 L12 12.3 Q11.8 15.2 9.6 16.4 Q7.2 17.6 4.4 16.6 Q6.6 15.6 6.9 13.6 Q7.3 11 9.6 10.4 Z" fill="#dcdcdc"/><path d="M14.6 9.6 A6 6 0 0 1 12.6 16.4" fill="none" stroke="#dcdcdc" stroke-width="1.2" stroke-dasharray="1.3 1.4"/><path d="M3 7.6 Q6 3.4 11 4.6" fill="none" stroke="#dcdcdc" stroke-width="1.4"/><path d="M1.4 5 L6 6 L2.8 9.6 Z" fill="#dcdcdc"/></svg>
<div class="tri" style="left:28px;top:306.5px"></div>
<svg style="left:10px;top:317.5px" width="20" height="20" viewBox="0 0 20 20"><path d="M11.6 2.6 L17.4 8 L10 15.6 L4.4 10.2 Z" fill="#dcdcdc"/><path d="M3.6 11 L8.8 16 L7.6 17.2 L3.4 17.2 L1.6 15.4 Q1 14.2 1.8 13 Z" fill="none" stroke="#dcdcdc" stroke-width="1.3"/><path d="M7 17.2 L18 17.2" stroke="#dcdcdc" stroke-width="1.4"/></svg>
<div class="tri" style="left:28px;top:332.5px"></div>
<svg style="left:10px;top:343.5px" width="20" height="20" viewBox="0 0 20 20"><defs><linearGradient id="gr1" x1="0" y1="0" x2="1" y2="0"><stop offset="0" stop-color="#3e3e3e"/><stop offset="1" stop-color="#e6e6e6"/></linearGradient></defs><rect x="2.2" y="3.8" width="15.6" height="12.4" fill="url(#gr1)" stroke="#dcdcdc" stroke-width="1.2"/></svg>
<div class="tri" style="left:28px;top:358.5px"></div>
<svg style="left:10px;top:369.5px" width="20" height="20" viewBox="0 0 20 20"><path d="M10 2 Q11 5 13.6 8.6 Q15.6 11.4 15.4 13.4 Q15 17.6 10 17.6 Q5 17.6 4.6 13.4 Q4.4 11.4 6.4 8.6 Q9 5 10 2 Z" fill="#dcdcdc"/></svg>
<div class="tri" style="left:28px;top:384.5px"></div>
<svg style="left:10px;top:395.5px" width="20" height="20" viewBox="0 0 20 20"><circle cx="12" cy="7.4" r="5.4" fill="#dcdcdc"/><circle cx="12.6" cy="7" r="2.4" fill="#c2c2c2"/><path d="M8 11.6 L2.6 17.4" stroke="#dcdcdc" stroke-width="2.2" stroke-linecap="round"/></svg>
<div class="tri" style="left:28px;top:410.5px"></div>
<svg style="left:10px;top:421.5px" width="20" height="20" viewBox="0 0 20 20"><path d="M11 2.2 L17.6 8.4 L15.4 10.4 Q15 14 11.4 15.4 L4.6 17.6 L2.6 15.8 L5.2 9 Q7 5.6 10.2 5.2 L9 4 Z" fill="none" stroke="#dcdcdc" stroke-width="1.5" stroke-linejoin="round"/><path d="M3.4 16.8 L9.4 10.8" stroke="#dcdcdc" stroke-width="1.2"/><circle cx="10.2" cy="10" r="1.5" fill="#dcdcdc"/><path d="M9.6 3.4 L16.4 9.8" stroke="#dcdcdc" stroke-width="2.2"/></svg>
<div class="tri" style="left:28px;top:436.5px"></div>
<svg style="left:10px;top:447.5px" width="20" height="20" viewBox="0 0 20 20"><path d="M3.4 3 L16.6 3 L16.6 6.8 L15.2 6.8 L15.2 4.8 L11.2 4.8 L11.2 15.8 L13.4 15.8 L13.4 17.4 L6.6 17.4 L6.6 15.8 L8.8 15.8 L8.8 4.8 L4.8 4.8 L4.8 6.8 L3.4 6.8 Z" fill="#dcdcdc"/></svg>
<div class="tri" style="left:28px;top:462.5px"></div>
<svg style="left:10px;top:473.5px" width="20" height="20" viewBox="0 0 20 20"><path d="M5.4 1.6 L5.4 16.6 L9 13.4 L11.2 18.4 L13.6 17.4 L11.4 12.4 L16 12.2 Z" fill="#1c1c1c" stroke="#dcdcdc" stroke-width="1.3" stroke-linejoin="round"/></svg>
<div class="tri" style="left:28px;top:488.5px"></div>
<svg style="left:10px;top:499.5px" width="20" height="20" viewBox="0 0 20 20"><rect x="2.2" y="4" width="15.6" height="12.2" fill="#6b6b6b" stroke="#dcdcdc" stroke-width="1.3"/><rect x="5" y="7" width="10" height="6.4" rx="1.6" fill="#777"/></svg>
<div class="tri" style="left:28px;top:514.5px"></div>
<svg style="left:10px;top:525.5px" width="20" height="20" viewBox="0 0 20 20"><path d="M5.2 11.5 L4.9 5.2 Q5 4 5.9 4 Q6.8 4 6.9 5.1 L7.3 9.3 L7.5 3.2 Q7.6 2 8.6 2 Q9.6 2 9.7 3.2 L9.9 9 L10.6 3.4 Q10.8 2.3 11.7 2.4 Q12.7 2.5 12.6 3.7 L12.3 9.4 L13.5 5.6 Q13.9 4.6 14.7 4.8 Q15.6 5.1 15.4 6.2 L14.3 12 Q13.9 15 12.6 16.6 Q11.2 18.3 8.9 18.3 Q6.6 18.3 5.1 16.3 L1.8 11.6 Q1.3 10.7 2.1 10.2 Q2.9 9.7 3.7 10.4 Z" fill="#dcdcdc"/></svg>
<div class="tri" style="left:28px;top:540.5px"></div>
<svg style="left:10px;top:551.5px" width="20" height="20" viewBox="0 0 20 20"><circle cx="8.2" cy="8" r="5.8" fill="none" stroke="#dcdcdc" stroke-width="1.6"/><path d="M12.4 12.4 L17.6 17.6" stroke="#dcdcdc" stroke-width="2.4" stroke-linecap="round"/><path d="M5 7 Q5.8 4.6 8.4 4.4" fill="none" stroke="#9a9a9a" stroke-width="1"/></svg>
<svg style="left:10px;top:577.5px" width="20" height="20" viewBox="0 0 20 20"><circle cx="3.6" cy="10.6" r="1.9" fill="#dcdcdc"/><circle cx="10" cy="10.6" r="1.9" fill="#dcdcdc"/><circle cx="16.4" cy="10.6" r="1.9" fill="#dcdcdc"/></svg>
<div class="tri" style="left:28px;top:592.5px"></div>
<div style="left:5px;top:607px;width:7px;height:7px;background:#dcdcdc;border:1px solid #dcdcdc"></div>
<div style="left:8px;top:610px;width:7px;height:7px;background:#1a1a1a;border:1px solid #dcdcdc"></div>
<svg style="left:21px;top:606px" width="12" height="12" viewBox="0 0 12 12"><path d="M2.4 3 L8.6 3 L8.6 9.2" fill="none" stroke="#dcdcdc" stroke-width="1.5"/><path d="M0 3 L3.2 .4 L3.2 5.6 Z M8.6 12 L6 8.6 L11.2 8.6 Z" fill="#dcdcdc"/></svg>
<div style="left:15px;top:632px;width:19px;height:19px;background:#fff;border:1px solid #e8e8e8"></div>
<div style="left:4px;top:621px;width:20px;height:20px;background:#000;border:1px solid #e8e8e8;box-shadow:0 0 0 1px #2a2a2a"></div>
</div>
<div id="rightdock" style="left:874px;top:69px;width:101px;height:654px;background:#535353">
<div style="left:0;top:0;width:18px;height:28px;background:#424242"></div>
<div style="left:18px;top:0;width:1px;height:654px;background:#3a3a3a"></div>
<div style="left:57px;top:0;width:2px;height:654px;background:#3a3a3a"></div>
<div style="left:96px;top:0;width:5px;height:654px;background:#484848"></div>
<!-- col headers -->
<div style="left:19px;top:0;width:38px;height:12px;background:#424242"></div>
<div style="left:59px;top:0;width:37px;height:12px;background:#424242"></div>
<svg style="left:43px;top:4px" width="9" height="5" viewBox="0 0 9 5"><path d="M3.7 0 L0.7 2.5 L3.7 5 Z M8 0 L5 2.5 L8 5 Z" fill="#cfcfcf"/></svg>
<svg style="left:83px;top:4px" width="9" height="5" viewBox="0 0 9 5"><path d="M3.7 0 L0.7 2.5 L3.7 5 Z M8 0 L5 2.5 L8 5 Z" fill="#cfcfcf"/></svg>
<div style="left:29px;top:16px;width:18px;height:3px;background:repeating-linear-gradient(to right,#6a6a6a 0,#6a6a6a 1px,#474747 1px,#474747 2px)"></div>
<div style="left:69px;top:16px;width:18px;height:3px;background:repeating-linear-gradient(to right,#6a6a6a 0,#6a6a6a 1px,#474747 1px,#474747 2px)"></div>
<div style="left:19px;top:50px;width:38px;height:1px;background:#3a3a3a"></div>
<div style="left:59px;top:51px;width:37px;height:2px;background:#3a3a3a"></div>
<div style="left:69px;top:57px;width:18px;height:3px;background:repeating-linear-gradient(to right,#6a6a6a 0,#6a6a6a 1px,#474747 1px,#474747 2px)"></div>
<div style="left:59px;top:148px;width:37px;height:2px;background:#3a3a3a"></div>
<!-- history icon -->
<svg style="left:31px;top:26px" width="17" height="19" viewBox="0 0 17 19"><rect x="1" y="1.4" width="4.2" height="4.2" fill="none" stroke="#dcdcdc" stroke-width="1.2"/><rect x="1" y="7.4" width="4.2" height="4.2" fill="none" stroke="#dcdcdc" stroke-width="1.2"/><rect x=".4" y="13" width="5.4" height="5.2" fill="#dcdcdc"/><path d="M8.6 15.8 Q14.6 13.4 13.2 6.6 Q12.4 4 10 3.4" fill="none" stroke="#dcdcdc" stroke-width="1.6"/><path d="M7.4 4.6 L11.6 .6 L11.6 6.4 Z" fill="#dcdcdc"/></svg>
<!-- 3d/properties icon -->
<svg style="left:69px;top:26px" width="19" height="19" viewBox="0 0 19 19"><path d="M6.5 1 L11.6 3.4 L11.6 9.6 L6.5 12 L1.4 9.6 L1.4 3.4 Z" fill="#cfcfcf"/><path d="M1.4 3.4 L6.5 5.8 L11.6 3.4 M6.5 5.8 L6.5 12" stroke="#535353" stroke-width="1" fill="none"/><rect x="13.4" y="1.2" width="4.8" height="4.2" fill="#dcdcdc"/><rect x="13.4" y="7.2" width="4.8" height="4.2" fill="#dcdcdc"/><rect x="1.4" y="13.6" width="16.8" height="4.4" fill="#dcdcdc"/><path d="M13.2 14.8 L16.8 14.8 L15 16.8 Z" fill="#535353"/></svg>
<!-- layers icon -->
<svg style="left:70px;top:68px" width="19" height="17" viewBox="0 0 19 17"><path d="M9.5 .6 L18.2 5.2 L9.5 9.8 L.8 5.2 Z" fill="#dcdcdc"/><path d="M2.6 8.6 L.8 9.6 L9.5 14.2 L18.2 9.6 L16.4 8.6 L9.5 12.2 Z" fill="#dcdcdc"/><path d="M2.6 11.4 L.8 12.4 L9.5 17 L18.2 12.4 L16.4 11.4 L9.5 15 Z" fill="#bcbcbc" opacity="0"/></svg>
<!-- channels icon selected -->
<div style="left:64px;top:93px;width:27px;height:22px;background:#383838;border-radius:2px"></div>
<svg style="left:68px;top:95px" width="19" height="18" viewBox="0 0 19 18"><circle cx="9.5" cy="6.2" r="5.4" fill="#8a8a8a"/><circle cx="6" cy="11.6" r="5.4" fill="#c4c4c4" opacity=".85"/><circle cx="13" cy="11.6" r="5.4" fill="#a6a6a6" opacity=".85"/><path d="M9.5 7.4 Q11.8 9.2 9.5 11.6 Q7.2 9.2 9.5 7.4 Z" fill="#2a2a2a"/></svg>
<!-- paths icon -->
<svg style="left:67px;top:124px" width="22" height="17" viewBox="0 0 22 17"><path d="M4 14 Q4 3 11 3 Q18 3 18 14" fill="none" stroke="#dcdcdc" stroke-width="1.2"/><path d="M2 3 L20 3" stroke="#dcdcdc" stroke-width="1.2"/><rect x=".6" y="1" width="4" height="4" fill="#dcdcdc"/><rect x="17.4" y="1" width="4" height="4" fill="#dcdcdc"/><rect x="9.2" y="1.2" width="3.6" height="3.6" fill="#dcdcdc"/><rect x="2.2" y="12.2" width="3.6" height="3.6" fill="#535353" stroke="#dcdcdc" stroke-width="1.1"/><rect x="16.2" y="12.2" width="3.6" height="3.6" fill="#535353" stroke="#dcdcdc" stroke-width="1.1"/></svg>
</div>
<div id="chpanel" style="left:687px;top:120px;width:245px;height:260px;background:#535353;box-shadow:0 2px 10px 2px rgba(0,0,0,.45),0 0 0 1px #303030">
<div style="left:0;top:0;width:245px;height:31px;background:#424242;border-bottom:1px solid #3a3a3a"></div>
<div class="ptab" style="left:0;top:3px;width:45px">图层</div>
<div class="ptab" style="left:45px;top:2px;width:46px;height:31px;background:#535353;color:#f0f0f0;border-color:#5e5e5e">通道</div>
<div class="ptab" style="left:91px;top:3px;width:43px">路径</div>
<svg style="left:202px;top:12px" width="11" height="9" viewBox="0 0 11 9"><path d="M1 1 L4.4 4.5 L1 8 M6 1 L9.4 4.5 L6 8" stroke="#dcdcdc" stroke-width="1.4" fill="none"/></svg>
<div style="left:219px;top:10px;width:1px;height:13px;background:#8a8a8a"></div>
<div style="left:227px;top:12px;width:11px;height:9px;background:repeating-linear-gradient(to bottom,#d0d0d0 0,#d0d0d0 1px,transparent 1px,transparent 2.66px)"></div>
<div style="left:228px;top:33px;width:17px;height:193px;background:#4a4a4a;border-left:1px solid #454545"></div>
<div class="row" style="left:0;top:34px;height:38px;background:#535353;width:228px">
<div class="eyebox"></div>
<div class="th"><svg width="22" height="31" viewBox="0 0 22 31" style="left:0;top:0"><defs><filter id="tf1" x="-10%" y="-10%" width="120%" height="120%"><feGaussianBlur stdDeviation=".55"/></filter></defs><rect width="22" height="31" fill="#ddd6cf"/><g filter="url(#tf1)"><path d="M-1 32 L-1 27.5 Q5 26 7.6 23 L14.4 23 Q17 26 23 27.5 L23 32 Z" fill="#b98467"/><path d="M7.4 20 L14.6 20 L14.8 25 L7.2 25 Z" fill="#8a5a44"/><path d="M3.4 10 Q3.2 2 11 1.8 Q18.8 2 18.6 10 L18.2 15 Q17.4 21.6 11 25 Q4.6 21.6 3.8 15 Z" fill="#d9a585"/><path d="M3 11.4 Q2 1 11 .2 Q20 1 19 11.4 Q18.2 6.4 15 5 Q10 6.4 6.4 5.2 Q3.8 7.4 3 11.4 Z" fill="#5c3d2b"/><path d="M14.6 9 Q17.4 12 16.4 17 Q15.4 21 12 24 Q15 19 14.6 9 Z" fill="#8a5a44" opacity=".55"/><path d="M5.4 11.3 L9.2 11 M12.8 11 L16.6 11.3" stroke="#5c3d2b" stroke-width="1"/><ellipse cx="7.4" cy="13" rx="1.5" ry=".8" fill="#3a2a24"/><ellipse cx="14.6" cy="13" rx="1.5" ry=".8" fill="#3a2a24"/><path d="M10.2 17.4 L11.8 17.4" stroke="#8a5a44" stroke-width=".9"/><path d="M8.8 20.2 Q11 21 13.2 20.2" stroke="#9a4a40" stroke-width="1" fill="none"/></g></svg></div>
<span class="nm" style="font-size:10.6px;top:15px">RGB</span><span class="sc">Ctrl+2</span>
</div>
<div class="row" style="left:0;top:72px;height:38px;background:#535353;width:228px">
<div class="eyebox"></div>
<div class="th"><svg width="22" height="31" viewBox="0 0 22 31" style="left:0;top:0"><defs><filter id="tf2" x="-10%" y="-10%" width="120%" height="120%"><feGaussianBlur stdDeviation=".55"/></filter></defs><rect width="22" height="31" fill="#e2e2e2"/><g filter="url(#tf2)"><path d="M-1 32 L-1 27.5 Q5 26 7.6 23 L14.4 23 Q17 26 23 27.5 L23 32 Z" fill="#dadada"/><path d="M7.4 20 L14.6 20 L14.8 25 L7.2 25 Z" fill="#c6c6c6"/><path d="M3.4 10 Q3.2 2 11 1.8 Q18.8 2 18.6 10 L18.2 15 Q17.4 21.6 11 25 Q4.6 21.6 3.8 15 Z" fill="#f2f2f2"/><path d="M3 11.4 Q2 1 11 .2 Q20 1 19 11.4 Q18.2 6.4 15 5 Q10 6.4 6.4 5.2 Q3.8 7.4 3 11.4 Z" fill="#b4b4b4"/><path d="M14.6 9 Q17.4 12 16.4 17 Q15.4 21 12 24 Q15 19 14.6 9 Z" fill="#c6c6c6" opacity=".55"/><path d="M5.4 11.3 L9.2 11 M12.8 11 L16.6 11.3" stroke="#b4b4b4" stroke-width="1"/><ellipse cx="7.4" cy="13" rx="1.5" ry=".8" fill="#6a6a6a"/><ellipse cx="14.6" cy="13" rx="1.5" ry=".8" fill="#6a6a6a"/><path d="M10.2 17.4 L11.8 17.4" stroke="#c6c6c6" stroke-width=".9"/><path d="M8.8 20.2 Q11 21 13.2 20.2" stroke="#6a6a6a" stroke-width="1" fill="none"/></g></svg></div>
<span class="nm">红</span><span class="sc">Ctrl+3</span>
</div>
<div class="row" style="left:0;top:110px;height:39px;background:#535353;width:228px">
<div class="eyebox"></div>
<div class="th"><svg width="22" height="31" viewBox="0 0 22 31" style="left:0;top:0"><defs><filter id="tf3" x="-10%" y="-10%" width="120%" height="120%"><feGaussianBlur stdDeviation=".55"/></filter></defs><rect width="22" height="31" fill="#cdcdcd"/><g filter="url(#tf3)"><path d="M-1 32 L-1 27.5 Q5 26 7.6 23 L14.4 23 Q17 26 23 27.5 L23 32 Z" fill="#b4b4b4"/><path d="M7.4 20 L14.6 20 L14.8 25 L7.2 25 Z" fill="#9a9a9a"/><path d="M3.4 10 Q3.2 2 11 1.8 Q18.8 2 18.6 10 L18.2 15 Q17.4 21.6 11 25 Q4.6 21.6 3.8 15 Z" fill="#d8d8d8"/><path d="M3 11.4 Q2 1 11 .2 Q20 1 19 11.4 Q18.2 6.4 15 5 Q10 6.4 6.4 5.2 Q3.8 7.4 3 11.4 Z" fill="#727272"/><path d="M14.6 9 Q17.4 12 16.4 17 Q15.4 21 12 24 Q15 19 14.6 9 Z" fill="#9a9a9a" opacity=".55"/><path d="M5.4 11.3 L9.2 11 M12.8 11 L16.6 11.3" stroke="#727272" stroke-width="1"/><ellipse cx="7.4" cy="13" rx="1.5" ry=".8" fill="#4a4a4a"/><ellipse cx="14.6" cy="13" rx="1.5" ry=".8" fill="#4a4a4a"/><path d="M10.2 17.4 L11.8 17.4" stroke="#9a9a9a" stroke-width=".9"/><path d="M8.8 20.2 Q11 21 13.2 20.2" stroke="#4a4a4a" stroke-width="1" fill="none"/></g></svg></div>
<span class="nm">绿</span><span class="sc">Ctrl+4</span>
</div>
<div class="row" style="left:0;top:149px;height:38px;background:#535353;width:228px">
<div class="eyebox"></div>
<div class="th"><svg width="22" height="31" viewBox="0 0 22 31" style="left:0;top:0"><defs><filter id="tf4" x="-10%" y="-10%" width="120%" height="120%"><feGaussianBlur stdDeviation=".55"/></filter></defs><rect width="22" height="31" fill="#c2c2c2"/><g filter="url(#tf4)"><path d="M-1 32 L-1 27.5 Q5 26 7.6 23 L14.4 23 Q17 26 23 27.5 L23 32 Z" fill="#a0a0a0"/><path d="M7.4 20 L14.6 20 L14.8 25 L7.2 25 Z" fill="#868686"/><path d="M3.4 10 Q3.2 2 11 1.8 Q18.8 2 18.6 10 L18.2 15 Q17.4 21.6 11 25 Q4.6 21.6 3.8 15 Z" fill="#c6c6c6"/><path d="M3 11.4 Q2 1 11 .2 Q20 1 19 11.4 Q18.2 6.4 15 5 Q10 6.4 6.4 5.2 Q3.8 7.4 3 11.4 Z" fill="#585858"/><path d="M14.6 9 Q17.4 12 16.4 17 Q15.4 21 12 24 Q15 19 14.6 9 Z" fill="#868686" opacity=".55"/><path d="M5.4 11.3 L9.2 11 M12.8 11 L16.6 11.3" stroke="#585858" stroke-width="1"/><ellipse cx="7.4" cy="13" rx="1.5" ry=".8" fill="#3e3e3e"/><ellipse cx="14.6" cy="13" rx="1.5" ry=".8" fill="#3e3e3e"/><path d="M10.2 17.4 L11.8 17.4" stroke="#868686" stroke-width=".9"/><path d="M8.8 20.2 Q11 21 13.2 20.2" stroke="#3e3e3e" stroke-width="1" fill="none"/></g></svg></div>
<span class="nm">蓝</span><span class="sc">Ctrl+5</span>
</div>
<div class="row" style="left:0;top:187px;height:39px;background:#6b6b6b;width:228px">
<svg style="left:6px;top:14px" width="15" height="11" viewBox="0 0 15 11"><path d="M.4 5.5 Q3.4 .6 7.5 .6 Q11.6 .6 14.6 5.5 Q11.6 10.4 7.5 10.4 Q3.4 10.4 .4 5.5 Z" fill="#e6e6e6"/><circle cx="7.5" cy="5.5" r="2.7" fill="#6b6b6b"/><circle cx="7.5" cy="5.5" r="1.3" fill="#e6e6e6"/></svg>
<div class="th"><svg width="22" height="31" viewBox="0 0 22 31" style="left:0;top:0"><rect width="22" height="31" fill="#a6a6a6"/><g opacity=".55"><path d="M4 9 Q4 2 11 2 Q18 2 18 9" fill="none" stroke="#b8b8b8" stroke-width="1"/><path d="M7 13.4 L9.6 13.4 M12.4 13.4 L15 13.4" stroke="#8a8a8a" stroke-width=".9"/><path d="M7 12.4 L9.6 12.4 M12.4 12.4 L15 12.4" stroke="#c0c0c0" stroke-width=".8"/><path d="M11 14 L11 18" stroke="#bcbcbc" stroke-width="1.2"/><path d="M9.4 18.6 L12.6 18.6" stroke="#8e8e8e" stroke-width=".8"/><path d="M8.6 21 L13.4 21" stroke="#8c8c8c" stroke-width=".9"/><path d="M8.6 20 L13.4 20" stroke="#bdbdbd" stroke-width=".8"/><path d="M5 24 Q11 29 17 24" fill="none" stroke="#b6b6b6" stroke-width=".9"/></g></svg></div>
<span class="nm">蓝 拷贝</span><span class="sc">Ctrl+6</span>
</div>
<div style="left:0;top:226px;width:245px;height:26px;background:#535353;border-top:1px solid #434343;border-bottom:1px solid #3a3a3a"></div>
<div style="left:0;top:252px;width:245px;height:8px;background:#4e4e4e"></div>
<div style="left:112px;top:255px;width:20px;height:2px;background:repeating-linear-gradient(to right,#6a6a6a 0,#6a6a6a 1px,#474747 1px,#474747 2px)"></div>
<svg style="left:115px;top:233px" width="12" height="12" viewBox="0 0 12 12"><circle cx="6" cy="6" r="4.8" fill="none" stroke="#dcdcdc" stroke-width="1.3" stroke-dasharray="1.5 1.5"/></svg>
<div style="left:143px;top:234px;width:14px;height:10px;background:#9a9a9a"></div>
<div style="left:147px;top:236px;width:6px;height:6px;border-radius:50%;background:#535353"></div>
<svg style="left:176px;top:233px" width="12" height="12" viewBox="0 0 12 12"><path d="M1.6 1.4 L10.4 1.4 L10.4 10.6 L5.4 10.6 L1.6 7 Z M1.6 7 L5.4 7 L5.4 10.6" fill="none" stroke="#dcdcdc" stroke-width="1.4" stroke-linejoin="round"/></svg>
<svg style="left:204px;top:232px" width="13" height="14" viewBox="0 0 13 14"><path d="M1 3.2 L12 3.2 M4.4 3 L4.4 1 L8.6 1 L8.6 3" fill="none" stroke="#dcdcdc" stroke-width="1.4"/><path d="M2.4 4.4 L2.9 13 L10.1 13 L10.6 4.4" fill="none" stroke="#dcdcdc" stroke-width="1.4"/><path d="M5 5.6 L5 11.4 M6.5 5.6 L6.5 11.4 M8 5.6 L8 11.4" stroke="#dcdcdc" stroke-width="1"/></svg>
</div>
<div id="edges" style="left:0;top:721px;width:975px;height:2px;background:#202020"></div>
<div style="left:0;top:33px;width:5px;height:690px;background:#4b4b4b;border-right:1px solid #404040"></div>
<div style="left:0;top:0;width:1px;height:723px;background:#2e2e2e"></div>
<!--DLG-->
<div id="dlg" style="left:298px;top:170px;width:324px;height:341px;background:#535353;box-shadow:0 3px 12px 1px rgba(0,0,0,.35)">
<div style="left:0;top:0;width:324px;height:30px;background:#ffffff"></div>
<span style="left:9px;top:8px;font-size:12px;color:#000">高反差保留</span>
<svg style="left:303px;top:9px" width="12" height="12" viewBox="0 0 12 12"><path d="M.8 .8 L11.2 11.2 M11.2 .8 L.8 11.2" stroke="#1a1a1a" stroke-width="1.1" fill="none"/></svg>
<div style="left:11px;top:40px;width:208px;height:208px;background:#3f3f3f"></div>
<svg id="prev" style="left:12px;top:41px" width="206" height="206" viewBox="0 0 206 206">
<defs><filter id="gr2" x="0" y="0" width="100%" height="100%"><feTurbulence type="fractalNoise" baseFrequency="0.5" numOctaves="3" seed="9"/><feColorMatrix type="matrix" values="2.6 0 0 0 -0.8  2.6 0 0 0 -0.8  2.6 0 0 0 -0.8  0 0 0 0 1"/></filter><filter id="pb05"><feGaussianBlur stdDeviation="0.5"/></filter><filter id="pb1"><feGaussianBlur stdDeviation="1"/></filter><filter id="pb2"><feGaussianBlur stdDeviation="2.2"/></filter><filter id="pb4"><feGaussianBlur stdDeviation="5"/></filter><clipPath id="pc"><rect width="206" height="206"/></clipPath></defs>
<g clip-path="url(#pc)"><rect width="206" height="206" fill="#a2a2a2"/>
<ellipse cx="26" cy="120" rx="40" ry="64" fill="#aaaaaa" filter="url(#pb4)"/><ellipse cx="182" cy="118" rx="40" ry="64" fill="#aaaaaa" filter="url(#pb4)"/>
<path d="M80 10 Q68 60 62 116 L90 116 L92 10 Z" fill="#989898" filter="url(#pb4)"/>
<path d="M122 10 Q134 60 142 108 L112 110 L110 10 Z" fill="#999999" filter="url(#pb4)"/>
<path d="M90 24 Q94 80 88 126 L112 126 Q108 80 112 24 Z" fill="#b9b9b9" filter="url(#pb4)"/>
<path d="M96 40 Q98 80 95 118 L105 118 Q103 80 105 40 Z" fill="#bfbfbf" filter="url(#pb2)"/>
<path d="M-2 -2 L56 -2 Q54 14 42 21 Q20 31 -2 33 Z" fill="#c4c4c4" filter="url(#pb1)"/>
<path d="M208 -2 L146 -2 Q150 15 164 21 Q186 29 208 27 Z" fill="#c4c4c4" filter="url(#pb1)"/>
<g filter="url(#pb05)"><circle cx="9" cy="8" r="15" fill="#939393"/><circle cx="9" cy="8" r="14.4" fill="none" stroke="#6e6e6e" stroke-width="2.2"/><circle cx="9" cy="8" r="9" fill="none" stroke="#b0b0b0" stroke-width="3" stroke-dasharray="1.2 1.6"/><circle cx="8" cy="2" r="6" fill="#5c5c5c"/>
<circle cx="193" cy="7" r="15" fill="#939393"/><circle cx="193" cy="7" r="14.4" fill="none" stroke="#6e6e6e" stroke-width="2.2"/><circle cx="193" cy="7" r="9" fill="none" stroke="#b0b0b0" stroke-width="3" stroke-dasharray="1.2 1.6"/><circle cx="194" cy="1" r="6" fill="#5c5c5c"/></g>
<path d="M42 6 Q48 9 53 16 Q48 17 45 15 Q43 10 42 6 Z" fill="#787878" filter="url(#pb05)"/><path d="M50 12 L54 17" stroke="#dedede" stroke-width="1.4"/>
<path d="M162 5 Q155 9 150 16 Q155 17 158 15 Q160 10 162 5 Z" fill="#787878" filter="url(#pb05)"/><path d="M153 12 L149 17" stroke="#dedede" stroke-width="1.4"/>
<path d="M-2 37 Q28 34 53 18" fill="none" stroke="#767676" stroke-width="3" filter="url(#pb1)"/>
<path d="M208 29 Q176 33 149 19" fill="none" stroke="#707070" stroke-width="3.6" filter="url(#pb1)"/>
<path d="M-2 44 Q30 43 58 26" fill="none" stroke="#c3c3c3" stroke-width="3.4" filter="url(#pb2)"/>
<path d="M208 38 Q176 42 146 28" fill="none" stroke="#c3c3c3" stroke-width="3.4" filter="url(#pb2)"/>
<g stroke="#7a7a7a" stroke-width=".8" fill="none"><path d="M8.9 35.4 l-0.3 3.7"/><path d="M11.1 35.1 l0.3 3.8"/><path d="M23.2 29 l-2.5 3.4"/><path d="M26.6 26.7 l0.3 3.1"/><path d="M11.8 33.4 l1 4.3"/><path d="M38.8 18.2 l-2.4 3.3"/><path d="M22.9 28.9 l0.8 3.4"/><path d="M8.5 35.8 l-2.1 4.8"/><path d="M21 30.8 l-1.3 3.7"/><path d="M9.9 33.9 l0.5 3.1"/><path d="M34.8 20.9 l0.9 4.7"/><path d="M33.7 22.9 l-0.5 4.3"/><path d="M7.1 35.3 l0.4 3"/><path d="M40.8 16.8 l-1.1 3.4"/><path d="M21 30.5 l1 3.5"/><path d="M3.1 35.1 l0 5"/><path d="M180.8 27.5 l0.9 4.4"/><path d="M168.2 27.6 l0.9 4.1"/><path d="M166.3 26.7 l0.2 4.8"/><path d="M173.9 27.7 l0.1 2.8"/><path d="M161 27.9 l1.7 3.4"/><path d="M189.4 27.8 l2.1 4.9"/><path d="M176.7 28.5 l2.4 4"/><path d="M198.6 27.2 l0.3 3.1"/><path d="M198.3 26.5 l-0.8 4.5"/><path d="M193.6 27.3 l1.9 2.6"/><path d="M169.9 27 l0.5 2.9"/><path d="M161.2 27 l2.1 5"/><path d="M192.3 27.3 l-0.1 4.9"/><path d="M182.2 27.9 l-0.9 3"/><path d="M196.6 27.9 l2.1 4"/><path d="M177.6 27.7 l2 3.3"/><path d="M182.6 27 l1.7 2.5"/><path d="M189.5 28.3 l-0.9 4"/><path d="M187.6 28.1 l1 3.1"/><path d="M176.7 28.4 l2.2 2.8"/></g>
<path d="M58 122 Q52 136 62 144 Q78 150 86 158 Q100 164 112 156 Q122 146 138 142 Q150 134 144 120 Q136 108 122 112 Q100 118 80 112 Q64 110 58 122 Z" fill="#b6b6b6" filter="url(#pb2)"/>
<ellipse cx="98" cy="138" rx="22" ry="15" fill="#c2c2c2" filter="url(#pb4)"/>
<ellipse cx="70" cy="130" rx="9" ry="9" fill="#bcbcbc" filter="url(#pb2)"/><ellipse cx="134" cy="128" rx="9" ry="9" fill="#bcbcbc" filter="url(#pb2)"/>
<path d="M57 118 Q50 136 62 146 Q76 152 86 160 Q100 166 112 158" fill="none" stroke="#888888" stroke-width="2.4" filter="url(#pb1)"/>
<path d="M112 158 Q122 148 138 144 Q152 136 146 116" fill="none" stroke="#848484" stroke-width="2.6" filter="url(#pb1)"/>
<path d="M122 147 Q132 140 142 142" fill="none" stroke="#6c6c6c" stroke-width="3" filter="url(#pb1)"/>
<path d="M63 143 Q72 146 82 155" fill="none" stroke="#787878" stroke-width="2.4" filter="url(#pb1)"/>
<path d="M52 150 Q70 160 84 168 M150 146 Q134 156 116 166" fill="none" stroke="#bdbdbd" stroke-width="3" filter="url(#pb2)"/>
<path d="M80 176 Q98 168 114 177 Q122 186 100 191 Q80 188 80 176 Z" fill="#c8c8c8" filter="url(#pb2)"/>
<path d="M96 160 L96 176" stroke="#9a9a9a" stroke-width="3" filter="url(#pb2)"/>
<path d="M14 208 Q60 190 98 195 Q140 190 186 206" fill="none" stroke="#bcbcbc" stroke-width="6" filter="url(#pb2)"/>
<path d="M22 207 Q70 199 100 204 Q140 199 180 206" fill="none" stroke="#868686" stroke-width="2.4" filter="url(#pb1)"/>
<path d="M164 204 Q172 201 180 204" fill="none" stroke="#e4e4e4" stroke-width="1.6"/>
<g fill="#6e6e6e" opacity=".8" filter="url(#pb05)"><ellipse cx="80" cy="77" rx="0.8" ry="0.6" transform="rotate(36 80 77)"/><ellipse cx="81" cy="76.2" rx="1.2" ry="0.8" transform="rotate(83 81 76.2)"/><ellipse cx="57.7" cy="105.5" rx="1.6" ry="1" transform="rotate(96 57.7 105.5)"/><ellipse cx="81.4" cy="114.1" rx="1.8" ry="1.5" transform="rotate(129 81.4 114.1)"/><ellipse cx="89.3" cy="35.6" rx="1.8" ry="1" transform="rotate(118 89.3 35.6)"/><ellipse cx="83.3" cy="48.8" rx="1.5" ry="1.4" transform="rotate(59 83.3 48.8)"/><ellipse cx="75.7" cy="113.2" rx="1.2" ry="0.7" transform="rotate(99 75.7 113.2)"/><ellipse cx="85.8" cy="107.5" rx="2.1" ry="1.9" transform="rotate(140 85.8 107.5)"/><ellipse cx="61.7" cy="72.3" rx="1.5" ry="0.9" transform="rotate(152 61.7 72.3)"/><ellipse cx="69.7" cy="110.4" rx="1.5" ry="1.2" transform="rotate(16 69.7 110.4)"/><ellipse cx="68.7" cy="53.4" rx="1.1" ry="0.6" transform="rotate(168 68.7 53.4)"/><ellipse cx="81.2" cy="69.4" rx="0.9" ry="0.5" transform="rotate(114 81.2 69.4)"/><ellipse cx="68.7" cy="30.4" rx="1.4" ry="1.1" transform="rotate(102 68.7 30.4)"/><ellipse cx="78.2" cy="72.7" rx="1.7" ry="0.9" transform="rotate(70 78.2 72.7)"/><ellipse cx="74" cy="39.5" rx="1.1" ry="0.8" transform="rotate(124 74 39.5)"/><ellipse cx="74.3" cy="63.6" rx="1" ry="0.7" transform="rotate(154 74.3 63.6)"/><ellipse cx="90.8" cy="39.1" rx="1.6" ry="1.4" transform="rotate(155 90.8 39.1)"/><ellipse cx="70.8" cy="29.7" rx="1.1" ry="1.1" transform="rotate(98 70.8 29.7)"/><ellipse cx="72.3" cy="95.8" rx="1.5" ry="1.3" transform="rotate(1 72.3 95.8)"/><ellipse cx="79.9" cy="86" rx="1.9" ry="1.7" transform="rotate(23 79.9 86)"/><ellipse cx="71.8" cy="66.3" rx="1.2" ry="1.2" transform="rotate(118 71.8 66.3)"/><ellipse cx="81.9" cy="95.8" rx="1.7" ry="1.2" transform="rotate(148 81.9 95.8)"/><ellipse cx="72.4" cy="50.2" rx="2" ry="1.4" transform="rotate(65 72.4 50.2)"/><ellipse cx="86.6" cy="50.4" rx="1.1" ry="1" transform="rotate(97 86.6 50.4)"/><ellipse cx="82.1" cy="93.3" rx="1.3" ry="1" transform="rotate(170 82.1 93.3)"/><ellipse cx="74.7" cy="87" rx="1.3" ry="0.9" transform="rotate(48 74.7 87)"/><ellipse cx="83.6" cy="67" rx="1.3" ry="1" transform="rotate(94 83.6 67)"/><ellipse cx="88.9" cy="73.9" rx="0.9" ry="0.7" transform="rotate(115 88.9 73.9)"/><ellipse cx="76.1" cy="73.5" rx="1.5" ry="0.9" transform="rotate(79 76.1 73.5)"/><ellipse cx="79.9" cy="95.1" rx="0.8" ry="0.5" transform="rotate(146 79.9 95.1)"/><ellipse cx="72.6" cy="68.4" rx="1" ry="0.8" transform="rotate(141 72.6 68.4)"/><ellipse cx="76.5" cy="106.6" rx="1.9" ry="1.5" transform="rotate(119 76.5 106.6)"/><ellipse cx="77.5" cy="66.5" rx="1.6" ry="0.9" transform="rotate(168 77.5 66.5)"/><ellipse cx="77.5" cy="79.1" rx="1.9" ry="1.5" transform="rotate(158 77.5 79.1)"/><ellipse cx="59.4" cy="72.3" rx="1.7" ry="1" transform="rotate(39 59.4 72.3)"/><ellipse cx="70.4" cy="88.8" rx="1.6" ry="1.5" transform="rotate(18 70.4 88.8)"/><ellipse cx="72.5" cy="54.3" rx="0.9" ry="0.9" transform="rotate(92 72.5 54.3)"/><ellipse cx="75.5" cy="79.7" rx="0.8" ry="0.7" transform="rotate(167 75.5 79.7)"/><ellipse cx="73.7" cy="74.2" rx="1.1" ry="0.8" transform="rotate(64 73.7 74.2)"/><ellipse cx="61.9" cy="93.3" rx="1.7" ry="1.4" transform="rotate(20 61.9 93.3)"/><ellipse cx="72.5" cy="87.6" rx="1.5" ry="1.3" transform="rotate(155 72.5 87.6)"/><ellipse cx="60.8" cy="62" rx="1" ry="0.9" transform="rotate(126 60.8 62)"/><ellipse cx="54.2" cy="77.5" rx="1.4" ry="0.8" transform="rotate(71 54.2 77.5)"/><ellipse cx="72.7" cy="52.3" rx="1.8" ry="1.7" transform="rotate(136 72.7 52.3)"/><ellipse cx="71.7" cy="61.7" rx="1.2" ry="0.8" transform="rotate(118 71.7 61.7)"/><ellipse cx="86.2" cy="71.8" rx="1.6" ry="1.3" transform="rotate(96 86.2 71.8)"/><ellipse cx="72.1" cy="56.8" rx="2" ry="1.6" transform="rotate(105 72.1 56.8)"/><ellipse cx="58.1" cy="53.6" rx="1.8" ry="1.7" transform="rotate(92 58.1 53.6)"/><ellipse cx="82.9" cy="58.9" rx="1.6" ry="1.1" transform="rotate(92 82.9 58.9)"/><ellipse cx="79.2" cy="103.6" rx="1.3" ry="1.3" transform="rotate(75 79.2 103.6)"/><ellipse cx="81.8" cy="84.5" rx="1.4" ry="1.1" transform="rotate(126 81.8 84.5)"/><ellipse cx="76.1" cy="29.4" rx="1.1" ry="0.8" transform="rotate(96 76.1 29.4)"/><ellipse cx="78.2" cy="101.4" rx="0.9" ry="0.8" transform="rotate(52 78.2 101.4)"/><ellipse cx="59" cy="43.9" rx="1.8" ry="1.5" transform="rotate(40 59 43.9)"/><ellipse cx="68.1" cy="89.6" rx="0.8" ry="0.7" transform="rotate(148 68.1 89.6)"/><ellipse cx="70" cy="120.7" rx="1.4" ry="1.1" transform="rotate(141 70 120.7)"/><ellipse cx="80.8" cy="40.3" rx="0.9" ry="0.6" transform="rotate(33 80.8 40.3)"/><ellipse cx="63.8" cy="70" rx="1.3" ry="1.1" transform="rotate(153 63.8 70)"/><ellipse cx="75.2" cy="59.5" rx="1.1" ry="0.7" transform="rotate(167 75.2 59.5)"/><ellipse cx="76" cy="118.9" rx="1.8" ry="1.8" transform="rotate(50 76 118.9)"/><ellipse cx="67.8" cy="55.8" rx="1.9" ry="1.7" transform="rotate(63 67.8 55.8)"/><ellipse cx="71.9" cy="58.3" rx="1.9" ry="1.3" transform="rotate(157 71.9 58.3)"/><ellipse cx="73.8" cy="88.8" rx="1.1" ry="0.8" transform="rotate(126 73.8 88.8)"/><ellipse cx="79.4" cy="111.8" rx="1.2" ry="1" transform="rotate(94 79.4 111.8)"/><ellipse cx="74.2" cy="91.4" rx="1.9" ry="1.1" transform="rotate(154 74.2 91.4)"/><ellipse cx="74.7" cy="65.2" rx="1.7" ry="1.4" transform="rotate(113 74.7 65.2)"/><ellipse cx="62.4" cy="72.6" rx="1.5" ry="1.1" transform="rotate(5 62.4 72.6)"/><ellipse cx="69.1" cy="49.9" rx="1.3" ry="1.1" transform="rotate(162 69.1 49.9)"/><ellipse cx="65.5" cy="34.3" rx="1.6" ry="1.2" transform="rotate(59 65.5 34.3)"/><ellipse cx="91.7" cy="75" rx="1.4" ry="0.9" transform="rotate(150 91.7 75)"/><ellipse cx="90.9" cy="43.2" rx="1.2" ry="0.8" transform="rotate(3 90.9 43.2)"/><ellipse cx="79" cy="46.3" rx="1.2" ry="0.8" transform="rotate(12 79 46.3)"/><ellipse cx="68.9" cy="75" rx="0.8" ry="0.5" transform="rotate(39 68.9 75)"/><ellipse cx="77" cy="83.4" rx="1.5" ry="0.9" transform="rotate(103 77 83.4)"/><ellipse cx="80.1" cy="80" rx="1.7" ry="1.1" transform="rotate(4 80.1 80)"/><ellipse cx="83.1" cy="80.6" rx="1.6" ry="0.9" transform="rotate(52 83.1 80.6)"/><ellipse cx="58.4" cy="90.5" rx="2" ry="1.7" transform="rotate(2 58.4 90.5)"/><ellipse cx="53.5" cy="111.8" rx="1.8" ry="1.6" transform="rotate(106 53.5 111.8)"/><ellipse cx="88.6" cy="77" rx="2" ry="1.8" transform="rotate(148 88.6 77)"/><ellipse cx="73" cy="70.9" rx="1.6" ry="1.5" transform="rotate(65 73 70.9)"/><ellipse cx="69.5" cy="66.8" rx="1.2" ry="1.1" transform="rotate(167 69.5 66.8)"/><ellipse cx="74.5" cy="83.4" rx="1.6" ry="1.2" transform="rotate(35 74.5 83.4)"/><ellipse cx="76.1" cy="54.1" rx="1.2" ry="0.7" transform="rotate(169 76.1 54.1)"/><ellipse cx="93.3" cy="84.1" rx="1.9" ry="1.5" transform="rotate(27 93.3 84.1)"/><ellipse cx="67.3" cy="47.2" rx="1.5" ry="1.1" transform="rotate(50 67.3 47.2)"/><ellipse cx="90.8" cy="81.4" rx="1.6" ry="1.2" transform="rotate(4 90.8 81.4)"/><ellipse cx="69.4" cy="78.4" rx="0.8" ry="0.5" transform="rotate(86 69.4 78.4)"/><ellipse cx="76.1" cy="96.2" rx="1.9" ry="1.2" transform="rotate(152 76.1 96.2)"/><ellipse cx="81.6" cy="59.5" rx="1.3" ry="0.8" transform="rotate(94 81.6 59.5)"/><ellipse cx="92.5" cy="35.8" rx="1" ry="0.8" transform="rotate(20 92.5 35.8)"/><ellipse cx="135.1" cy="46.5" rx="2.1" ry="1.5" transform="rotate(97 135.1 46.5)"/><ellipse cx="127.5" cy="53.9" rx="1.6" ry="1.5" transform="rotate(54 127.5 53.9)"/><ellipse cx="132.9" cy="25.6" rx="1.8" ry="1.6" transform="rotate(6 132.9 25.6)"/><ellipse cx="147" cy="30" rx="2.1" ry="1.6" transform="rotate(170 147 30)"/><ellipse cx="120.2" cy="37.2" rx="1.7" ry="1.1" transform="rotate(33 120.2 37.2)"/><ellipse cx="123.9" cy="59" rx="1.7" ry="1.5" transform="rotate(42 123.9 59)"/><ellipse cx="106.8" cy="72.5" rx="0.9" ry="0.7" transform="rotate(28 106.8 72.5)"/><ellipse cx="135.6" cy="90.8" rx="1.6" ry="1.6" transform="rotate(74 135.6 90.8)"/><ellipse cx="116.9" cy="73.4" rx="1.7" ry="1.1" transform="rotate(89 116.9 73.4)"/><ellipse cx="141.3" cy="60.9" rx="1.8" ry="1.7" transform="rotate(118 141.3 60.9)"/><ellipse cx="120.1" cy="44.1" rx="1.7" ry="1.6" transform="rotate(34 120.1 44.1)"/><ellipse cx="109.5" cy="52.9" rx="1.6" ry="1" transform="rotate(41 109.5 52.9)"/><ellipse cx="132.4" cy="40.9" rx="1.8" ry="1" transform="rotate(87 132.4 40.9)"/><ellipse cx="150.1" cy="72.3" rx="1.7" ry="1.3" transform="rotate(10 150.1 72.3)"/><ellipse cx="130.6" cy="44.8" rx="1.5" ry="1.2" transform="rotate(32 130.6 44.8)"/><ellipse cx="138.4" cy="30.3" rx="1" ry="0.9" transform="rotate(24 138.4 30.3)"/><ellipse cx="137.7" cy="97.4" rx="1.3" ry="0.9" transform="rotate(101 137.7 97.4)"/><ellipse cx="110.7" cy="90.8" rx="1.2" ry="1.1" transform="rotate(10 110.7 90.8)"/><ellipse cx="128.4" cy="82.9" rx="1.2" ry="0.9" transform="rotate(48 128.4 82.9)"/><ellipse cx="133.4" cy="59.7" rx="2.1" ry="2" transform="rotate(117 133.4 59.7)"/><ellipse cx="136.4" cy="97.9" rx="1.4" ry="0.8" transform="rotate(97 136.4 97.9)"/><ellipse cx="132.6" cy="54.2" rx="1.7" ry="1.3" transform="rotate(42 132.6 54.2)"/><ellipse cx="126.7" cy="57.7" rx="1.8" ry="1.8" transform="rotate(133 126.7 57.7)"/><ellipse cx="139.6" cy="88.7" rx="1.6" ry="0.9" transform="rotate(112 139.6 88.7)"/><ellipse cx="139.2" cy="74.3" rx="2.1" ry="2" transform="rotate(112 139.2 74.3)"/><ellipse cx="117.8" cy="61.5" rx="1.5" ry="1.3" transform="rotate(57 117.8 61.5)"/><ellipse cx="146.2" cy="105.4" rx="1.6" ry="1.3" transform="rotate(90 146.2 105.4)"/><ellipse cx="111.2" cy="86.9" rx="1.3" ry="1" transform="rotate(20 111.2 86.9)"/><ellipse cx="113.8" cy="67.3" rx="1.5" ry="1" transform="rotate(141 113.8 67.3)"/><ellipse cx="123.6" cy="39.2" rx="1.6" ry="1.4" transform="rotate(136 123.6 39.2)"/><ellipse cx="119.8" cy="69" rx="2" ry="1.9" transform="rotate(52 119.8 69)"/><ellipse cx="145.3" cy="83.4" rx="1.1" ry="1" transform="rotate(108 145.3 83.4)"/><ellipse cx="119.5" cy="48.2" rx="1.5" ry="0.9" transform="rotate(154 119.5 48.2)"/><ellipse cx="116.6" cy="31.3" rx="1" ry="0.6" transform="rotate(16 116.6 31.3)"/><ellipse cx="132.7" cy="90.9" rx="1.7" ry="1.3" transform="rotate(141 132.7 90.9)"/><ellipse cx="115.9" cy="31.8" rx="1.7" ry="1.7" transform="rotate(101 115.9 31.8)"/><ellipse cx="126.6" cy="99.8" rx="1.4" ry="0.8" transform="rotate(74 126.6 99.8)"/><ellipse cx="141.3" cy="54.7" rx="2" ry="1.7" transform="rotate(66 141.3 54.7)"/><ellipse cx="144.7" cy="44.7" rx="1.9" ry="1.5" transform="rotate(150 144.7 44.7)"/><ellipse cx="127" cy="41.3" rx="1.7" ry="1.1" transform="rotate(87 127 41.3)"/><ellipse cx="112.7" cy="54.2" rx="1.1" ry="0.7" transform="rotate(59 112.7 54.2)"/><ellipse cx="132" cy="50.8" rx="1.7" ry="1.6" transform="rotate(43 132 50.8)"/><ellipse cx="129" cy="44.1" rx="1.6" ry="1.4" transform="rotate(154 129 44.1)"/><ellipse cx="156.1" cy="93" rx="1.9" ry="1.5" transform="rotate(145 156.1 93)"/><ellipse cx="121.6" cy="50.6" rx="1.3" ry="1.2" transform="rotate(118 121.6 50.6)"/><ellipse cx="146.5" cy="108.5" rx="1.3" ry="1.1" transform="rotate(42 146.5 108.5)"/><ellipse cx="117.3" cy="92.4" rx="1.1" ry="0.8" transform="rotate(45 117.3 92.4)"/><ellipse cx="157.6" cy="102.6" rx="0.9" ry="0.8" transform="rotate(167 157.6 102.6)"/><ellipse cx="121.1" cy="82.5" rx="1.7" ry="1.2" transform="rotate(102 121.1 82.5)"/><ellipse cx="148.9" cy="74.7" rx="2" ry="1.6" transform="rotate(37 148.9 74.7)"/><ellipse cx="118.4" cy="83.8" rx="1.2" ry="0.7" transform="rotate(101 118.4 83.8)"/><ellipse cx="115.9" cy="75" rx="1.4" ry="1" transform="rotate(158 115.9 75)"/><ellipse cx="132.2" cy="34.6" rx="1.6" ry="0.9" transform="rotate(147 132.2 34.6)"/><ellipse cx="126.6" cy="89.3" rx="1.2" ry="1" transform="rotate(109 126.6 89.3)"/><ellipse cx="126.9" cy="32.3" rx="2" ry="1.9" transform="rotate(48 126.9 32.3)"/><ellipse cx="118.4" cy="106" rx="1.2" ry="1.1" transform="rotate(114 118.4 106)"/><ellipse cx="146.1" cy="66" rx="2.1" ry="1.2" transform="rotate(30 146.1 66)"/><ellipse cx="154.3" cy="25.4" rx="1.4" ry="1.3" transform="rotate(108 154.3 25.4)"/><ellipse cx="123.5" cy="76.4" rx="1.1" ry="1" transform="rotate(35 123.5 76.4)"/><ellipse cx="137.6" cy="98.8" rx="0.9" ry="0.6" transform="rotate(103 137.6 98.8)"/><ellipse cx="112.9" cy="57.4" rx="2" ry="1.8" transform="rotate(37 112.9 57.4)"/><ellipse cx="143.4" cy="78.7" rx="2" ry="1.8" transform="rotate(126 143.4 78.7)"/><ellipse cx="136.4" cy="103.2" rx="1.1" ry="1" transform="rotate(4 136.4 103.2)"/><ellipse cx="138.3" cy="96.6" rx="0.9" ry="0.7" transform="rotate(153 138.3 96.6)"/><ellipse cx="125.1" cy="43.7" rx="0.9" ry="0.7" transform="rotate(23 125.1 43.7)"/><ellipse cx="143.8" cy="29.3" rx="0.8" ry="0.8" transform="rotate(62 143.8 29.3)"/><ellipse cx="148.2" cy="37.1" rx="1.3" ry="0.8" transform="rotate(122 148.2 37.1)"/><ellipse cx="127.5" cy="39.3" rx="0.8" ry="0.8" transform="rotate(8 127.5 39.3)"/><ellipse cx="144.2" cy="53.6" rx="1.6" ry="1.1" transform="rotate(118 144.2 53.6)"/><ellipse cx="119" cy="50" rx="1.6" ry="0.9" transform="rotate(81 119 50)"/><ellipse cx="120.8" cy="98.9" rx="1" ry="0.8" transform="rotate(43 120.8 98.9)"/><ellipse cx="120.3" cy="58.9" rx="1.6" ry="1" transform="rotate(6 120.3 58.9)"/><ellipse cx="138" cy="57.3" rx="1.7" ry="1.5" transform="rotate(134 138 57.3)"/><ellipse cx="119.6" cy="84.2" rx="1.8" ry="1.2" transform="rotate(124 119.6 84.2)"/><ellipse cx="148.9" cy="51.8" rx="1.2" ry="1" transform="rotate(86 148.9 51.8)"/><ellipse cx="129.6" cy="74.9" rx="1.4" ry="1.2" transform="rotate(163 129.6 74.9)"/><ellipse cx="114.5" cy="81" rx="0.8" ry="0.4" transform="rotate(66 114.5 81)"/><ellipse cx="132.7" cy="56.3" rx="1" ry="1" transform="rotate(35 132.7 56.3)"/><ellipse cx="116.2" cy="30.1" rx="1.1" ry="1.1" transform="rotate(162 116.2 30.1)"/><ellipse cx="132.2" cy="44.7" rx="1.3" ry="1" transform="rotate(13 132.2 44.7)"/><ellipse cx="132.5" cy="49.7" rx="1.3" ry="0.9" transform="rotate(71 132.5 49.7)"/><ellipse cx="124.1" cy="84.5" rx="1.1" ry="1" transform="rotate(46 124.1 84.5)"/><ellipse cx="146.4" cy="22.4" rx="1.9" ry="1.1" transform="rotate(68 146.4 22.4)"/><ellipse cx="128.3" cy="80.1" rx="1.5" ry="1.4" transform="rotate(56 128.3 80.1)"/><ellipse cx="121.1" cy="42.1" rx="1" ry="0.6" transform="rotate(155 121.1 42.1)"/><ellipse cx="131.4" cy="62.1" rx="1.4" ry="1.1" transform="rotate(108 131.4 62.1)"/><ellipse cx="112.8" cy="69.2" rx="1.9" ry="1.5" transform="rotate(111 112.8 69.2)"/><ellipse cx="124.3" cy="42.9" rx="1.5" ry="1.5" transform="rotate(139 124.3 42.9)"/><ellipse cx="142.4" cy="67.8" rx="2" ry="2" transform="rotate(109 142.4 67.8)"/><ellipse cx="122.2" cy="84.9" rx="1" ry="0.9" transform="rotate(67 122.2 84.9)"/><ellipse cx="128.3" cy="89.3" rx="1.7" ry="1" transform="rotate(85 128.3 89.3)"/><ellipse cx="110.1" cy="68.7" rx="1.4" ry="1.4" transform="rotate(111 110.1 68.7)"/><ellipse cx="112.9" cy="97.6" rx="1.1" ry="0.9" transform="rotate(47 112.9 97.6)"/><ellipse cx="25.5" cy="63.4" rx="1" ry="0.7" transform="rotate(19 25.5 63.4)"/><ellipse cx="22.4" cy="114.5" rx="0.9" ry="0.7" transform="rotate(74 22.4 114.5)"/><ellipse cx="48.8" cy="115.2" rx="1" ry="0.9" transform="rotate(133 48.8 115.2)"/><ellipse cx="48.2" cy="109.9" rx="0.8" ry="0.6" transform="rotate(82 48.2 109.9)"/><ellipse cx="26.4" cy="96.1" rx="1.1" ry="0.6" transform="rotate(77 26.4 96.1)"/><ellipse cx="46.8" cy="57.9" rx="1.1" ry="0.6" transform="rotate(60 46.8 57.9)"/><ellipse cx="57.4" cy="119.2" rx="0.9" ry="0.7" transform="rotate(19 57.4 119.2)"/><ellipse cx="3.3" cy="114.5" rx="1.1" ry="1" transform="rotate(104 3.3 114.5)"/><ellipse cx="21" cy="88.9" rx="1.1" ry="1" transform="rotate(50 21 88.9)"/><ellipse cx="50.7" cy="135.3" rx="0.6" ry="0.3" transform="rotate(165 50.7 135.3)"/><ellipse cx="28.8" cy="83.3" rx="0.7" ry="0.7" transform="rotate(160 28.8 83.3)"/><ellipse cx="11.6" cy="97.6" rx="0.9" ry="0.8" transform="rotate(17 11.6 97.6)"/><ellipse cx="26.5" cy="75.7" rx="1" ry="0.7" transform="rotate(78 26.5 75.7)"/><ellipse cx="35.9" cy="96.6" rx="0.8" ry="0.4" transform="rotate(78 35.9 96.6)"/><ellipse cx="55.2" cy="72.9" rx="0.9" ry="0.5" transform="rotate(165 55.2 72.9)"/><ellipse cx="24.6" cy="61.1" rx="0.9" ry="0.7" transform="rotate(23 24.6 61.1)"/><ellipse cx="25.1" cy="94.9" rx="0.8" ry="0.5" transform="rotate(108 25.1 94.9)"/><ellipse cx="60.7" cy="55.9" rx="0.9" ry="0.8" transform="rotate(39 60.7 55.9)"/><ellipse cx="25.8" cy="83.4" rx="0.8" ry="0.5" transform="rotate(100 25.8 83.4)"/><ellipse cx="46.3" cy="117.9" rx="0.7" ry="0.7" transform="rotate(33 46.3 117.9)"/><ellipse cx="38.6" cy="63.9" rx="0.8" ry="0.6" transform="rotate(40 38.6 63.9)"/><ellipse cx="14.9" cy="126.2" rx="0.8" ry="0.6" transform="rotate(70 14.9 126.2)"/><ellipse cx="61.3" cy="65.8" rx="0.8" ry="0.5" transform="rotate(128 61.3 65.8)"/><ellipse cx="10.7" cy="103.6" rx="0.9" ry="0.5" transform="rotate(78 10.7 103.6)"/><ellipse cx="49.3" cy="159.9" rx="0.7" ry="0.6" transform="rotate(5 49.3 159.9)"/><ellipse cx="20" cy="78.8" rx="1" ry="0.6" transform="rotate(157 20 78.8)"/><ellipse cx="12.3" cy="122.8" rx="0.7" ry="0.6" transform="rotate(59 12.3 122.8)"/><ellipse cx="50.2" cy="129.1" rx="1.2" ry="1.1" transform="rotate(158 50.2 129.1)"/><ellipse cx="40.9" cy="114.7" rx="1.1" ry="0.9" transform="rotate(16 40.9 114.7)"/><ellipse cx="33.6" cy="145.5" rx="1" ry="1" transform="rotate(119 33.6 145.5)"/><ellipse cx="31.3" cy="59.5" rx="0.8" ry="0.6" transform="rotate(130 31.3 59.5)"/><ellipse cx="40.2" cy="92.7" rx="0.8" ry="0.7" transform="rotate(155 40.2 92.7)"/><ellipse cx="30.6" cy="97.3" rx="1.1" ry="0.9" transform="rotate(116 30.6 97.3)"/><ellipse cx="33.6" cy="105.6" rx="1.2" ry="0.8" transform="rotate(133 33.6 105.6)"/><ellipse cx="57.4" cy="57.9" rx="0.7" ry="0.7" transform="rotate(70 57.4 57.9)"/><ellipse cx="43.5" cy="166.4" rx="1.2" ry="0.7" transform="rotate(76 43.5 166.4)"/><ellipse cx="5.4" cy="137.2" rx="1" ry="0.9" transform="rotate(125 5.4 137.2)"/><ellipse cx="60.7" cy="70.8" rx="0.7" ry="0.5" transform="rotate(145 60.7 70.8)"/><ellipse cx="41.1" cy="69.1" rx="0.9" ry="0.6" transform="rotate(58 41.1 69.1)"/><ellipse cx="56.1" cy="81.1" rx="1.1" ry="1" transform="rotate(125 56.1 81.1)"/><ellipse cx="39.1" cy="127.8" rx="1" ry="0.7" transform="rotate(2 39.1 127.8)"/><ellipse cx="43.6" cy="145.6" rx="0.8" ry="0.7" transform="rotate(37 43.6 145.6)"/><ellipse cx="11.4" cy="93.1" rx="0.9" ry="0.7" transform="rotate(95 11.4 93.1)"/><ellipse cx="59.5" cy="75.8" rx="0.9" ry="0.6" transform="rotate(134 59.5 75.8)"/><ellipse cx="8.3" cy="163.3" rx="0.9" ry="0.8" transform="rotate(102 8.3 163.3)"/><ellipse cx="31.5" cy="111.6" rx="0.6" ry="0.4" transform="rotate(18 31.5 111.6)"/><ellipse cx="1.8" cy="111.6" rx="0.8" ry="0.8" transform="rotate(106 1.8 111.6)"/><ellipse cx="10.7" cy="119.2" rx="1.2" ry="0.8" transform="rotate(158 10.7 119.2)"/><ellipse cx="41.5" cy="113.3" rx="1.3" ry="1.2" transform="rotate(158 41.5 113.3)"/><ellipse cx="30.1" cy="129.9" rx="0.8" ry="0.4" transform="rotate(18 30.1 129.9)"/><ellipse cx="177" cy="135.7" rx="0.9" ry="0.8" transform="rotate(33 177 135.7)"/><ellipse cx="180.7" cy="105.7" rx="0.9" ry="0.9" transform="rotate(2 180.7 105.7)"/><ellipse cx="199.5" cy="87.3" rx="0.7" ry="0.5" transform="rotate(114 199.5 87.3)"/><ellipse cx="178" cy="78.4" rx="1" ry="0.6" transform="rotate(25 178 78.4)"/><ellipse cx="164.1" cy="148.1" rx="0.9" ry="0.6" transform="rotate(17 164.1 148.1)"/><ellipse cx="166.6" cy="166.4" rx="1" ry="0.8" transform="rotate(55 166.6 166.4)"/><ellipse cx="161.7" cy="50.9" rx="1" ry="0.8" transform="rotate(92 161.7 50.9)"/><ellipse cx="166" cy="68.2" rx="1" ry="0.7" transform="rotate(144 166 68.2)"/><ellipse cx="204.7" cy="59.2" rx="0.7" ry="0.5" transform="rotate(21 204.7 59.2)"/><ellipse cx="184.8" cy="69.2" rx="0.9" ry="0.7" transform="rotate(139 184.8 69.2)"/><ellipse cx="177.4" cy="123.1" rx="0.9" ry="0.8" transform="rotate(150 177.4 123.1)"/><ellipse cx="185.3" cy="96.8" rx="1.2" ry="0.7" transform="rotate(99 185.3 96.8)"/><ellipse cx="146.5" cy="103.4" rx="1.2" ry="1.1" transform="rotate(106 146.5 103.4)"/><ellipse cx="179.4" cy="105.6" rx="0.7" ry="0.5" transform="rotate(23 179.4 105.6)"/><ellipse cx="185.5" cy="67.4" rx="0.8" ry="0.5" transform="rotate(12 185.5 67.4)"/><ellipse cx="179.4" cy="85" rx="0.7" ry="0.6" transform="rotate(90 179.4 85)"/><ellipse cx="191.2" cy="106.1" rx="0.8" ry="0.7" transform="rotate(91 191.2 106.1)"/><ellipse cx="197.9" cy="112.5" rx="1.3" ry="1.3" transform="rotate(142 197.9 112.5)"/><ellipse cx="196.8" cy="108.4" rx="1.3" ry="0.7" transform="rotate(35 196.8 108.4)"/><ellipse cx="168.4" cy="97.2" rx="1.1" ry="1" transform="rotate(35 168.4 97.2)"/><ellipse cx="166.4" cy="90.1" rx="0.7" ry="0.4" transform="rotate(57 166.4 90.1)"/><ellipse cx="196" cy="118.2" rx="1.2" ry="0.8" transform="rotate(99 196 118.2)"/><ellipse cx="152.4" cy="60.6" rx="1.1" ry="0.8" transform="rotate(97 152.4 60.6)"/><ellipse cx="183.5" cy="96.7" rx="1" ry="0.5" transform="rotate(111 183.5 96.7)"/><ellipse cx="168.7" cy="136.4" rx="1.2" ry="0.9" transform="rotate(157 168.7 136.4)"/><ellipse cx="189.5" cy="125.5" rx="1.1" ry="0.8" transform="rotate(47 189.5 125.5)"/><ellipse cx="151.4" cy="94" rx="1.2" ry="1" transform="rotate(37 151.4 94)"/><ellipse cx="160.2" cy="69.7" rx="1.3" ry="1.3" transform="rotate(29 160.2 69.7)"/><ellipse cx="177.6" cy="109.5" rx="1" ry="0.6" transform="rotate(15 177.6 109.5)"/><ellipse cx="148.5" cy="42.4" rx="1.1" ry="1" transform="rotate(97 148.5 42.4)"/><ellipse cx="186.3" cy="103.9" rx="1.3" ry="1.2" transform="rotate(43 186.3 103.9)"/><ellipse cx="163.4" cy="135.3" rx="1.2" ry="1" transform="rotate(95 163.4 135.3)"/><ellipse cx="204.5" cy="109.7" rx="0.6" ry="0.5" transform="rotate(30 204.5 109.7)"/><ellipse cx="154.9" cy="127.8" rx="1.1" ry="0.6" transform="rotate(108 154.9 127.8)"/><ellipse cx="151.4" cy="110" rx="1.2" ry="0.7" transform="rotate(68 151.4 110)"/><ellipse cx="181.1" cy="80.6" rx="0.7" ry="0.5" transform="rotate(48 181.1 80.6)"/><ellipse cx="163.1" cy="102.2" rx="1.1" ry="1" transform="rotate(114 163.1 102.2)"/><ellipse cx="174.3" cy="127.8" rx="1" ry="0.8" transform="rotate(34 174.3 127.8)"/><ellipse cx="160.3" cy="125.1" rx="1.1" ry="1.1" transform="rotate(148 160.3 125.1)"/><ellipse cx="154.7" cy="112.5" rx="0.7" ry="0.5" transform="rotate(152 154.7 112.5)"/><ellipse cx="183" cy="122.6" rx="0.6" ry="0.5" transform="rotate(123 183 122.6)"/><ellipse cx="166.9" cy="75.4" rx="1.1" ry="1.1" transform="rotate(59 166.9 75.4)"/><ellipse cx="144.3" cy="115.2" rx="0.7" ry="0.5" transform="rotate(160 144.3 115.2)"/><ellipse cx="192.2" cy="67.5" rx="0.7" ry="0.5" transform="rotate(99 192.2 67.5)"/><ellipse cx="176" cy="126.2" rx="0.6" ry="0.6" transform="rotate(58 176 126.2)"/><ellipse cx="166.4" cy="89.7" rx="0.8" ry="0.8" transform="rotate(67 166.4 89.7)"/><ellipse cx="171.3" cy="141.2" rx="0.8" ry="0.8" transform="rotate(38 171.3 141.2)"/><ellipse cx="167.1" cy="85.9" rx="1.2" ry="0.9" transform="rotate(133 167.1 85.9)"/><ellipse cx="187.9" cy="84.5" rx="1.1" ry="0.8" transform="rotate(18 187.9 84.5)"/><ellipse cx="63.7" cy="175.9" rx="1" ry="0.9" transform="rotate(40 63.7 175.9)"/><ellipse cx="143.5" cy="177.7" rx="1" ry="0.8" transform="rotate(84 143.5 177.7)"/><ellipse cx="127.6" cy="198.4" rx="1" ry="0.8" transform="rotate(137 127.6 198.4)"/><ellipse cx="77.9" cy="169.3" rx="1" ry="0.8" transform="rotate(157 77.9 169.3)"/><ellipse cx="120.5" cy="163" rx="0.5" ry="0.3" transform="rotate(12 120.5 163)"/><ellipse cx="176" cy="189.5" rx="0.9" ry="0.9" transform="rotate(116 176 189.5)"/><ellipse cx="112.8" cy="160.8" rx="0.8" ry="0.5" transform="rotate(67 112.8 160.8)"/><ellipse cx="145.5" cy="182.1" rx="0.8" ry="0.5" transform="rotate(45 145.5 182.1)"/><ellipse cx="188.5" cy="176.9" rx="0.9" ry="0.7" transform="rotate(102 188.5 176.9)"/><ellipse cx="118.5" cy="162.2" rx="0.5" ry="0.3" transform="rotate(71 118.5 162.2)"/><ellipse cx="101.5" cy="187.2" rx="0.7" ry="0.7" transform="rotate(86 101.5 187.2)"/><ellipse cx="144.6" cy="197.9" rx="1.1" ry="1" transform="rotate(36 144.6 197.9)"/><ellipse cx="142.7" cy="172.7" rx="0.6" ry="0.5" transform="rotate(132 142.7 172.7)"/><ellipse cx="140.6" cy="165.8" rx="0.9" ry="0.6" transform="rotate(81 140.6 165.8)"/><ellipse cx="67.7" cy="174.1" rx="0.9" ry="0.8" transform="rotate(114 67.7 174.1)"/><ellipse cx="62.8" cy="197" rx="0.5" ry="0.4" transform="rotate(79 62.8 197)"/><ellipse cx="39.2" cy="188.3" rx="0.7" ry="0.4" transform="rotate(73 39.2 188.3)"/><ellipse cx="101.5" cy="171" rx="0.6" ry="0.5" transform="rotate(36 101.5 171)"/><ellipse cx="110.3" cy="186.6" rx="0.5" ry="0.5" transform="rotate(73 110.3 186.6)"/><ellipse cx="184.2" cy="188.4" rx="0.8" ry="0.6" transform="rotate(49 184.2 188.4)"/><ellipse cx="61.8" cy="176.3" rx="1" ry="0.6" transform="rotate(17 61.8 176.3)"/><ellipse cx="65.3" cy="177.6" rx="0.7" ry="0.5" transform="rotate(32 65.3 177.6)"/><ellipse cx="128.6" cy="184.8" rx="0.6" ry="0.5" transform="rotate(108 128.6 184.8)"/><ellipse cx="48.4" cy="176.4" rx="0.8" ry="0.5" transform="rotate(44 48.4 176.4)"/><ellipse cx="94.7" cy="189.5" rx="0.9" ry="0.9" transform="rotate(5 94.7 189.5)"/><ellipse cx="86.8" cy="184.9" rx="1" ry="0.8" transform="rotate(105 86.8 184.9)"/><ellipse cx="111.9" cy="197.7" rx="0.7" ry="0.4" transform="rotate(84 111.9 197.7)"/><ellipse cx="136.6" cy="190.8" rx="0.7" ry="0.7" transform="rotate(101 136.6 190.8)"/><ellipse cx="183" cy="174.1" rx="0.9" ry="0.6" transform="rotate(51 183 174.1)"/><ellipse cx="98.6" cy="166.8" rx="0.9" ry="0.5" transform="rotate(76 98.6 166.8)"/><ellipse cx="145.3" cy="185" rx="0.9" ry="0.8" transform="rotate(80 145.3 185)"/></g>
<rect width="206" height="206" filter="url(#gr2)" opacity=".17"/>
</g></svg>
<div style="left:235px;top:41px;width:78px;height:25px;border:2px solid #c4c4c4;border-radius:13px;text-align:center;line-height:21px;color:#fff;font-size:12px">确定</div>
<div style="left:235px;top:75px;width:78px;height:25px;border:1px solid #717171;border-radius:13px;text-align:center;line-height:23px;color:#f2f2f2;font-size:12px">取消</div>
<div style="left:235px;top:111px;width:12px;height:12px;background:#e2e2e2;border-radius:2px"></div>
<svg style="left:236px;top:113px" width="10" height="9" viewBox="0 0 10 9"><path d="M1.4 4.4 L4 7 L8.8 1.4" stroke="#2a2a2a" stroke-width="1.8" fill="none"/></svg>
<span style="left:255px;top:111px;font-size:12px;color:#f0f0f0">预览(P)</span>
<svg style="left:53px;top:256px" width="15" height="15" viewBox="0 0 15 15"><circle cx="5.8" cy="5.8" r="4.6" stroke="#d6d6d6" stroke-width="1.3" fill="none"/><path d="M9.2 9.2 L13.8 13.8" stroke="#d6d6d6" stroke-width="1.8"/><path d="M3.6 5.8 L8 5.8" stroke="#d6d6d6" stroke-width="1.2"/></svg>
<span style="left:99px;top:258px;font-size:12px;color:#dcdcdc">100%</span>
<svg style="left:161px;top:256px" width="15" height="15" viewBox="0 0 15 15"><circle cx="5.8" cy="5.8" r="4.6" stroke="#d6d6d6" stroke-width="1.3" fill="none"/><path d="M9.2 9.2 L13.8 13.8" stroke="#d6d6d6" stroke-width="1.8"/><path d="M3.6 5.8 L8 5.8 M5.8 3.6 L5.8 8" stroke="#d6d6d6" stroke-width="1.2"/></svg>
<span style="left:25px;top:288px;font-size:12px;color:#e0e0e0">半径(R):</span>
<div style="left:77px;top:282px;width:55px;height:22px;background:#454545;border:1px solid #2f5d9e;box-shadow:0 0 0 1px #3d567c"></div>
<span style="left:82px;top:288px;font-size:12px;color:#fff">10</span>
<div style="left:96px;top:287px;width:1px;height:12px;background:#fff"></div>
<span style="left:143px;top:288px;font-size:12px;color:#e0e0e0">像素</span>
<div style="left:19px;top:316px;width:192px;height:3px;background:#7a7a7a;border-radius:1px"></div>
<svg style="left:89px;top:320px" width="12" height="12" viewBox="0 0 12 12"><path d="M6 .6 Q7.2 .8 8.2 2.4 L11.2 7 Q11.8 8.4 11.4 10 Q11 11.2 9.8 11.2 L2.2 11.2 Q1 11.2 .6 10 Q.2 8.4 .8 7 L3.8 2.4 Q4.8 .8 6 .6 Z" fill="#f4f4f4"/></svg>
<div style="left:0;top:0;width:324px;height:341px;border:1px solid #3a3a3a"></div>
</div>
<!--/DLG-->
<!--WM-->
<span style="left:724px;top:675px;font-size:24px;font-weight:bold;color:#fff;text-shadow:2px 2px 1px #000,1px 1px 0 #000">头条</span>
<span style="left:779px;top:674px;font-size:25px;color:#fff;text-shadow:2px 2px 1px #000,1px 1px 0 #000;letter-spacing:0">@软件寻找精灵</span>
<!--/WM-->
</body>
</html>
